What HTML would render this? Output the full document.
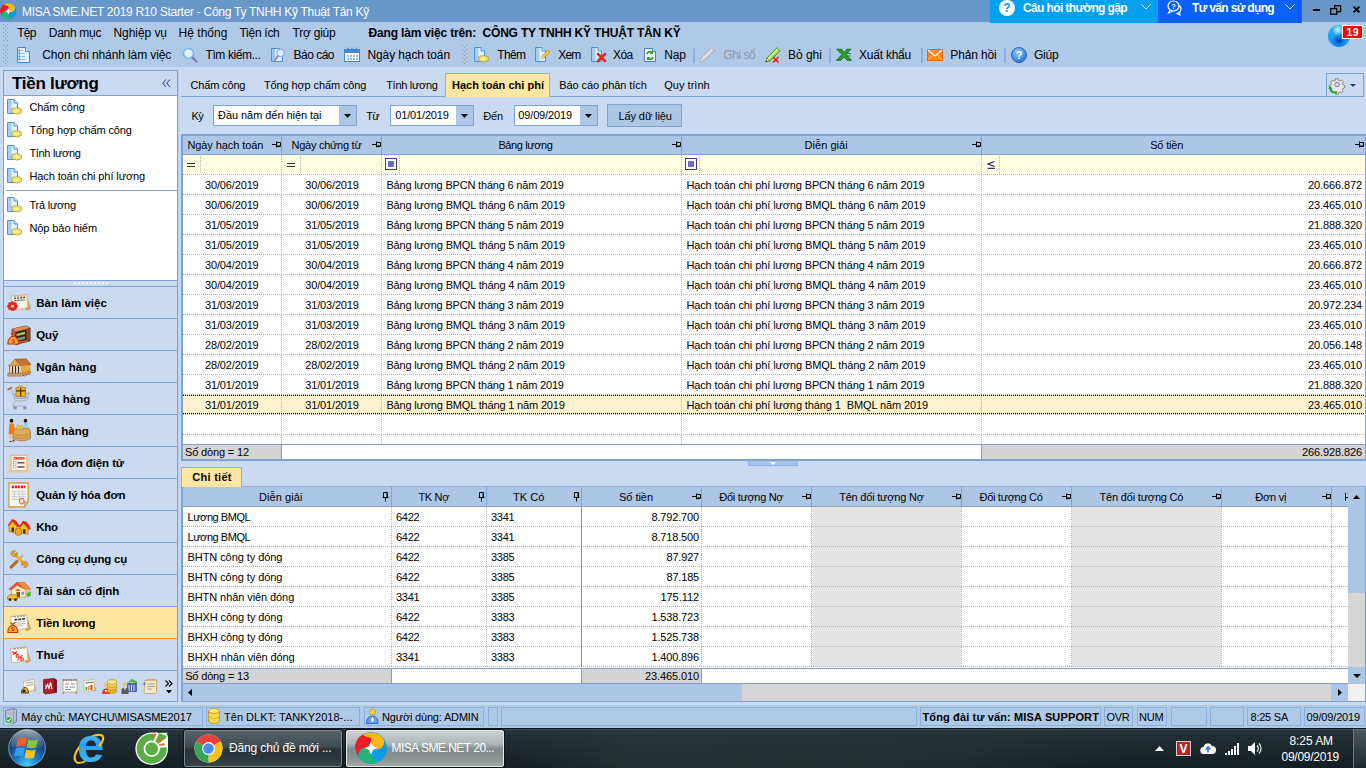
<!DOCTYPE html>
<html>
<head>
<meta charset="utf-8">
<title>MISA SME.NET 2019</title>
<style>
*{box-sizing:border-box;margin:0;padding:0}
html,body{width:1366px;height:768px;overflow:hidden}
body{position:relative;background:#cadaf0;font-family:"Liberation Sans",sans-serif;font-size:12px;color:#000;line-height:16px}
.a{position:absolute;white-space:pre}
svg{position:absolute;overflow:visible}
</style>
</head>
<body>
<div class="a" style="left:0px;top:0px;width:1366px;height:22px;background:#6796c8;"></div>
<div class="a" style="left:0px;top:22px;width:1366px;height:45px;background:#b0c9e7;"></div>
<svg style="left:-0.3px;top:3px" width="16.5" height="16.5" viewBox="0 0 32 32"><defs><clipPath id="lg1"><circle cx="16" cy="16" r="16"/></clipPath></defs><g clip-path="url(#lg1)"><circle cx="16" cy="16" r="16" fill="#1aa0e8"/><circle cx="8.500" cy="12" r="9.500" fill="#ee1c24"/><path d="M8 3.500C14-2 28 1 29.500 11 30 16 25 19 20.500 16.500 16 14 17 8 13 5.500 11 4 9 4 8 3.500z" fill="#fdb913"/><path d="M29 8.500C35 16 32 28 22 30.500 17 31 14.500 25 17 21.500 19.500 17 26 18 28 14 29 12 29 10 29 8.500z" fill="#0d9be8"/><path d="M24 29.500C17 34 5 31 3 22 2.500 17 8 14.500 11.500 16.500 16 19 15 25 19 27.500 21 28.500 23 29 24 29.500z" fill="#22b573"/><path d="M3.500 24C-2 17 1 5 10 2.500 15 2 18 7.500 15.500 11.500 13 16 6.500 15 4.500 19 3.500 21 3.500 23 3.500 24z" fill="#ee1c24"/><path d="M8 3.500C14-2 28 1 29.500 11 28 6 22 3.500 17 5 14 6 12 5 8 3.500z" fill="#fdb913"/><path d="M16 9.500L18 14 22.500 16 18 18 16 22.500 14 18 9.500 16 14 14z" fill="#fff"/></g></svg>
<span class="a" style="top:3.64px;font-size:12px;line-height:16px;left:22.00px;color:#fff;letter-spacing:-0.279px;">MISA SME.NET 2019 R10 Starter - Công Ty TNHH Kỹ Thuật Tân Kỹ</span>
<div class="a" style="left:990px;top:0px;width:168px;height:23px;background:#05a0f0;"></div>
<svg style="left:999px;top:-0.5px" width="16" height="16" viewBox="0 0 16 16"><circle cx="8" cy="8" r="8" fill="#fff"/><text x="8" y="12.300" font-family="Liberation Sans" font-weight="bold" font-size="12" fill="#05a0f0" text-anchor="middle">?</text></svg>
<span class="a" style="top:0.14px;font-size:12px;line-height:16px;left:1023.00px;font-weight:bold;color:#fff;letter-spacing:-0.623px;">Câu hỏi thường gặp</span>
<svg style="left:1141px;top:4px" width="10" height="7" viewBox="0 0 10 7"><path d="M.5 .5l4.500 4.500 4.500-4.500" fill="none" stroke="#d8efff" stroke-width="1"/></svg>
<div class="a" style="left:1158px;top:0px;width:144px;height:23px;background:#0a60fa;"></div>
<svg style="left:1167px;top:0px" width="18" height="15" viewBox="0 0 18 15"><ellipse cx="6.500" cy="6" rx="5.500" ry="5" fill="none" stroke="#fff" stroke-width="1.200"/><path d="M3 10l-1.500 3 4-2" fill="none" stroke="#fff" stroke-width="1.100"/><path d="M12 5.500a5 4.500 0 0 1-2 8l3 1.500-.5-2.500" fill="none" stroke="#fff" stroke-width="1.100"/><text x="6.500" y="9" font-family="Liberation Sans" font-weight="bold" font-size="7.500" fill="#fff" text-anchor="middle">?</text></svg>
<span class="a" style="top:0.14px;font-size:12px;line-height:16px;left:1192.00px;font-weight:bold;color:#fff;letter-spacing:-0.671px;">Tư vấn sử dụng</span>
<svg style="left:1285px;top:4px" width="10" height="7" viewBox="0 0 10 7"><path d="M.5 .5l4.500 4.500 4.500-4.500" fill="none" stroke="#d8e4ff" stroke-width="1"/></svg>
<div class="a" style="left:1313px;top:9px;width:7px;height:2px;background:#000;"></div>
<svg style="left:1330px;top:5px" width="12" height="10" viewBox="0 0 12 10"><rect x="4.600" y=".7" width="6" height="6" fill="none" stroke="#000" stroke-width="1.300"/><rect x=".7" y="3.600" width="6" height="5.600" fill="#6796c8" stroke="#000" stroke-width="1.300"/></svg>
<svg style="left:1353px;top:6px" width="7" height="7" viewBox="0 0 7 7"><path d="M.6 .6l5.800 5.800M6.400 .6l-5.800 5.800" stroke="#000" stroke-width="1.900"/></svg>
<svg style="left:3px;top:24px" width="5" height="18" viewBox="0 0 5 18"><rect x="0" y="0" width="1" height="1" fill="#9a98a4"/><rect x="4" y="0" width="1" height="1" fill="#9a98a4"/><rect x="2" y="2" width="1" height="1" fill="#9a98a4"/><rect x="0" y="4" width="1" height="1" fill="#9a98a4"/><rect x="4" y="4" width="1" height="1" fill="#9a98a4"/><rect x="2" y="6" width="1" height="1" fill="#9a98a4"/><rect x="0" y="8" width="1" height="1" fill="#9a98a4"/><rect x="4" y="8" width="1" height="1" fill="#9a98a4"/><rect x="2" y="10" width="1" height="1" fill="#9a98a4"/><rect x="0" y="12" width="1" height="1" fill="#9a98a4"/><rect x="4" y="12" width="1" height="1" fill="#9a98a4"/><rect x="2" y="14" width="1" height="1" fill="#9a98a4"/><rect x="0" y="16" width="1" height="1" fill="#9a98a4"/><rect x="4" y="16" width="1" height="1" fill="#9a98a4"/></svg>
<svg style="left:3px;top:45px" width="5" height="20" viewBox="0 0 5 20"><rect x="0" y="0" width="1" height="1" fill="#9a98a4"/><rect x="4" y="0" width="1" height="1" fill="#9a98a4"/><rect x="2" y="2" width="1" height="1" fill="#9a98a4"/><rect x="0" y="4" width="1" height="1" fill="#9a98a4"/><rect x="4" y="4" width="1" height="1" fill="#9a98a4"/><rect x="2" y="6" width="1" height="1" fill="#9a98a4"/><rect x="0" y="8" width="1" height="1" fill="#9a98a4"/><rect x="4" y="8" width="1" height="1" fill="#9a98a4"/><rect x="2" y="10" width="1" height="1" fill="#9a98a4"/><rect x="0" y="12" width="1" height="1" fill="#9a98a4"/><rect x="4" y="12" width="1" height="1" fill="#9a98a4"/><rect x="2" y="14" width="1" height="1" fill="#9a98a4"/><rect x="0" y="16" width="1" height="1" fill="#9a98a4"/><rect x="4" y="16" width="1" height="1" fill="#9a98a4"/><rect x="2" y="18" width="1" height="1" fill="#9a98a4"/></svg>
<span class="a" style="top:24.54px;font-size:12px;line-height:16px;left:17.30px;letter-spacing:-0.796px;">Tệp</span>
<span class="a" style="top:24.54px;font-size:12px;line-height:16px;left:48.80px;letter-spacing:-0.300px;">Danh mục</span>
<span class="a" style="top:24.54px;font-size:12px;line-height:16px;left:113.50px;letter-spacing:-0.061px;">Nghiệp vụ</span>
<span class="a" style="top:24.54px;font-size:12px;line-height:16px;left:178.50px;letter-spacing:0.037px;">Hệ thống</span>
<span class="a" style="top:24.54px;font-size:12px;line-height:16px;left:239.50px;letter-spacing:-0.281px;">Tiện ích</span>
<span class="a" style="top:24.54px;font-size:12px;line-height:16px;left:292.50px;letter-spacing:-0.223px;">Trợ giúp</span>
<span class="a" style="top:24.54px;font-size:12px;line-height:16px;left:368.50px;font-weight:bold;letter-spacing:-0.169px;">Đang làm việc trên:</span>
<span class="a" style="top:24.54px;font-size:12px;line-height:16px;left:482.50px;font-weight:bold;letter-spacing:-0.182px;">CÔNG TY TNHH KỸ THUẬT TÂN KỸ</span>
<svg style="left:16.3px;top:47px" width="16" height="16" viewBox="0 0 16 16"><path d="M1.5 .5h8l4 4v11h-12z" fill="#e4f0fc" stroke="#3f8ad6"/><path d="M9.5 .5v4h4" fill="#cfe3f8" stroke="#3f8ad6"/><rect x="2.500" y="2.5" width="1.800" height="1.800" fill="#2f7fd0"/><rect x="5.500" y="3.0" width="1.5" height="1" fill="#8abcec"/><rect x="2.500" y="5.5" width="1.800" height="1.800" fill="#2f7fd0"/><rect x="5.500" y="6.0" width="3.5" height="1" fill="#8abcec"/><rect x="2.500" y="8.5" width="1.800" height="1.800" fill="#2f7fd0"/><rect x="5.500" y="9.0" width="3.5" height="1" fill="#8abcec"/><rect x="2.500" y="11.5" width="1.800" height="1.800" fill="#2f7fd0"/><rect x="5.500" y="12.0" width="3.5" height="1" fill="#8abcec"/></svg>
<span class="a" style="top:46.54px;font-size:12px;line-height:16px;left:42.20px;letter-spacing:-0.105px;">Chọn chi nhánh làm việc</span>
<svg style="left:182px;top:47px" width="16" height="16" viewBox="0 0 16 16"><circle cx="6.5" cy="6.5" r="5" fill="#dff0ff" stroke="#79b4ea" stroke-width="1.6"/><path d="M10.5 10.5l4 4" stroke="#8a78c8" stroke-width="2.4" stroke-linecap="round"/></svg>
<span class="a" style="top:46.54px;font-size:12px;line-height:16px;left:205.50px;letter-spacing:-0.395px;">Tìm kiếm...</span>
<svg style="left:270px;top:47px" width="16" height="16" viewBox="0 0 16 16"><path d="M1.5 1.5h8l3 3v10h-11z" fill="#eaf3fd" stroke="#4a8fd8"/><path d="M2 2h3v12H2z" fill="#9cc6f2"/><circle cx="10.5" cy="6" r="3.6" fill="#e6f3ff" stroke="#7fb6ea" stroke-width="1.3"/><path d="M8 9l-3 4" stroke="#8a78c8" stroke-width="1.8" stroke-linecap="round"/></svg>
<span class="a" style="top:46.54px;font-size:12px;line-height:16px;left:293.50px;letter-spacing:-0.507px;">Báo cáo</span>
<svg style="left:344px;top:47px" width="16" height="16" viewBox="0 0 16 16"><rect x=".5" y="2.5" width="15" height="12" fill="#fff" stroke="#3f8ad6"/><rect x="1" y="3" width="14" height="3" fill="#3f8ad6"/><path d="M4 .5v3M8 .5v3M12 .5v3" stroke="#3f8ad6" stroke-width="1.2"/><rect x="3" y="8" width="2" height="2" fill="#8fbdea"/><rect x="6" y="8" width="2" height="2" fill="#8fbdea"/><rect x="9" y="8" width="2" height="2" fill="#8fbdea"/><rect x="12" y="8" width="2" height="2" fill="#8fbdea"/><rect x="3" y="11" width="2" height="2" fill="#8fbdea"/><rect x="6" y="11" width="2" height="2" fill="#8fbdea"/><rect x="9" y="11" width="2" height="2" fill="#8fbdea"/><rect x="12" y="11" width="2" height="2" fill="#8fbdea"/></svg>
<span class="a" style="top:46.54px;font-size:12px;line-height:16px;left:367.50px;letter-spacing:-0.112px;">Ngày hạch toán</span>
<svg style="left:462px;top:45px" width="5" height="20" viewBox="0 0 5 20"><rect x="0" y="0" width="1" height="1" fill="#9a98a4"/><rect x="4" y="0" width="1" height="1" fill="#9a98a4"/><rect x="2" y="2" width="1" height="1" fill="#9a98a4"/><rect x="0" y="4" width="1" height="1" fill="#9a98a4"/><rect x="4" y="4" width="1" height="1" fill="#9a98a4"/><rect x="2" y="6" width="1" height="1" fill="#9a98a4"/><rect x="0" y="8" width="1" height="1" fill="#9a98a4"/><rect x="4" y="8" width="1" height="1" fill="#9a98a4"/><rect x="2" y="10" width="1" height="1" fill="#9a98a4"/><rect x="0" y="12" width="1" height="1" fill="#9a98a4"/><rect x="4" y="12" width="1" height="1" fill="#9a98a4"/><rect x="2" y="14" width="1" height="1" fill="#9a98a4"/><rect x="0" y="16" width="1" height="1" fill="#9a98a4"/><rect x="4" y="16" width="1" height="1" fill="#9a98a4"/><rect x="2" y="18" width="1" height="1" fill="#9a98a4"/></svg>
<svg style="left:474px;top:47px" width="16" height="16" viewBox="0 0 16 16"><path d="M.5 .5h6.500l3.500 3.500v10.500h-10z" fill="#e6f1fc" stroke="#4a92dc"/><path d="M1 1h3.500v13H1z" fill="#a8cdf4"/><path d="M7 .5v3.500h3.500" fill="#d4e6f9" stroke="#4a92dc"/><g transform="translate(9.500,11.800) scale(1,.72)"><path d="M-5.500 0l1.200-1-.7-1.500 1.700-.3.300-1.400 1.700.5 1.300-1.100 1.300 1.100 1.700-.5.300 1.400 1.700.3-.7 1.500 1.200 1-1.200 1 .7 1.500-1.700.3-.3 1.400-1.700-.5-1.300 1.100-1.300-1.100-1.700.5-.3-1.400-1.700-.3.700-1.500z" fill="#f3e66a" stroke="#a39a28" stroke-width=".8"/><ellipse rx="2.600" ry="1.600" fill="#f8f0a0"/></g></svg>
<span class="a" style="top:46.54px;font-size:12px;line-height:16px;left:497.30px;letter-spacing:-0.672px;">Thêm</span>
<svg style="left:535px;top:47px" width="16" height="16" viewBox="0 0 16 16"><path d="M.5 .5h6.500l3.500 3.500v10.500h-10z" fill="#e6f1fc" stroke="#4a92dc"/><path d="M1 1h3.500v13H1z" fill="#a8cdf4"/><path d="M7 .5v3.500h3.500" fill="#d4e6f9" stroke="#4a92dc"/><path d="M6 12l1-3 6-6 2 2-6 6z" fill="#f5c63b" stroke="#b98a14" stroke-width=".7"/><path d="M6 12l1-3 2 2z" fill="#f7e3b0"/></svg>
<span class="a" style="top:46.54px;font-size:12px;line-height:16px;left:558.20px;letter-spacing:-0.763px;">Xem</span>
<svg style="left:591px;top:47px" width="16" height="16" viewBox="0 0 16 16"><path d="M.5 .5h6.500l3.500 3.500v10.500h-10z" fill="#e6f1fc" stroke="#4a92dc"/><path d="M1 1h3.500v13H1z" fill="#a8cdf4"/><path d="M7 .5v3.500h3.500" fill="#d4e6f9" stroke="#4a92dc"/><path d="M7 7l7 7M14 7l-7 7" stroke="#e0262c" stroke-width="2.6" stroke-linecap="round"/></svg>
<span class="a" style="top:46.54px;font-size:12px;line-height:16px;left:613.00px;letter-spacing:-0.586px;">Xóa</span>
<svg style="left:642px;top:47px" width="16" height="16" viewBox="0 0 16 16"><path d="M2.5 1.5h8l3 3v10h-11z" fill="#f2f6fc" stroke="#5b78b8"/><path d="M10.5 1.5v3h3" fill="#d5e1f3" stroke="#5b78b8"/><path d="M5 7a3 3 0 0 1 5-1.5" fill="none" stroke="#27a334" stroke-width="1.8"/><path d="M11 3.5v3.5h-3.5z" fill="#27a334"/><path d="M11 10a3 3 0 0 1-5 1.5" fill="none" stroke="#27a334" stroke-width="1.8"/><path d="M5 13.500v-3.500h3.500z" fill="#27a334"/></svg>
<span class="a" style="top:46.54px;font-size:12px;line-height:16px;left:664.30px;letter-spacing:-0.239px;">Nạp</span>
<div class="a" style="left:693px;top:48px;width:2px;height:15px;background:#8ab0e2;"></div>
<svg style="left:699px;top:47px" width="16" height="16" viewBox="0 0 16 16"><path d="M1 14.800l1.200-3.800L12.500 .7l3 3L5 14z" fill="#cfd2d6" stroke="#9a9ea6" stroke-width=".8"/><path d="M3.500 11.500L13.500 1.700" stroke="#e6e8ea" stroke-width="1.300"/><path d="M1 14.800l1.200-3.800 2.800 3z" fill="#ececec" stroke="#9a9ea6" stroke-width=".5"/></svg>
<span class="a" style="top:46.54px;font-size:12px;line-height:16px;left:723.30px;color:#8e959e;letter-spacing:-0.448px;">Ghi sổ</span>
<svg style="left:765px;top:47px" width="16" height="16" viewBox="0 0 16 16"><path d="M.8 14.800l1.200-3.800L12 .7l3 3L5 14z" fill="#a4e458" stroke="#3a8a1a" stroke-width=".9"/><path d="M3.500 11.500L13 1.700" stroke="#d4f8a0" stroke-width="1.200"/><path d="M.8 14.800l1.200-3.800 2.800 3z" fill="#f0e6c0" stroke="#3a6a1a" stroke-width=".5"/><path d="M.8 14.800l.5-1.500 1 1z" fill="#222"/><path d="M8 10l5.500 5.500M13.500 10L8 15.500" stroke="#ff0a0a" stroke-width="1.500"/></svg>
<span class="a" style="top:46.54px;font-size:12px;line-height:16px;left:788.00px;letter-spacing:-0.039px;">Bỏ ghi</span>
<div class="a" style="left:829px;top:48px;width:2px;height:15px;background:#8ab0e2;"></div>
<svg style="left:836px;top:47px" width="16" height="16" viewBox="0 0 16 16"><path d="M.8 2.200h4.700l2.500 3.200 3-3.200h4l-5 5.300 5.500 5.800H11l-3-3.500-3 3.500H.5L6 7.500z" fill="#27a030" stroke="#0e5e16" stroke-width=".8"/><path d="M10 6.500h5M10.500 9h4.500" stroke="#0e5e16" stroke-width=".7"/></svg>
<span class="a" style="top:46.54px;font-size:12px;line-height:16px;left:859.00px;letter-spacing:-0.227px;">Xuất khẩu</span>
<div class="a" style="left:921px;top:48px;width:2px;height:15px;background:#8ab0e2;"></div>
<svg style="left:927px;top:47px" width="16" height="16" viewBox="0 0 16 16"><rect x=".5" y="2.500" width="15" height="11" fill="#f58a2c" stroke="#d96a10"/><path d="M1 3l7 6 7-6" fill="none" stroke="#fff" stroke-width="1.1"/><path d="M1 13l5-5M15 13l-5-5" stroke="#ffd9b0" stroke-width=".8"/></svg>
<span class="a" style="top:46.54px;font-size:12px;line-height:16px;left:950.30px;letter-spacing:-0.134px;">Phản hồi</span>
<div class="a" style="left:1004px;top:48px;width:2px;height:15px;background:#8ab0e2;"></div>
<svg style="left:1011px;top:47px" width="16" height="16" viewBox="0 0 16 16"><defs><radialGradient id="hg" cx=".4" cy=".3" r=".8"><stop offset="0" stop-color="#8ec4ff"/><stop offset="1" stop-color="#1c6fd8"/></radialGradient></defs><circle cx="8" cy="8" r="7.500" fill="url(#hg)" stroke="#2a63b8"/><text x="8" y="12" font-family="Liberation Sans" font-weight="bold" font-size="11" fill="#fff" text-anchor="middle">?</text></svg>
<span class="a" style="top:46.54px;font-size:12px;line-height:16px;left:1034.00px;letter-spacing:-0.240px;">Giúp</span>
<svg style="left:1328px;top:25px" width="22" height="22" viewBox="0 0 22 22"><defs><radialGradient id="sg" cx=".45" cy=".22" r=".55"><stop offset="0" stop-color="#d0f6ff"/><stop offset=".45" stop-color="#2fb0f6"/><stop offset="1" stop-color="#1a98f0"/></radialGradient><radialGradient id="sg2" cx=".5" cy=".7" r=".35"><stop offset="0" stop-color="#0038b8"/><stop offset="1" stop-color="#0a60d8" stop-opacity="0"/></radialGradient></defs><circle cx="11" cy="11" r="11" fill="url(#sg)"/><circle cx="11" cy="11" r="11" fill="url(#sg2)"/></svg>
<div class="a" style="left:1342px;top:24.5px;width:20.5px;height:14px;background:#ff0000;border:.6px solid #fff;"></div>
<span class="a" style="top:24.16px;font-size:10.5px;line-height:16px;left:1346.50px;font-weight:bold;color:#fff;letter-spacing:0.406px;">19</span>
<div class="a" style="left:3px;top:70px;width:175px;height:632px;background:#cadaf0;border:1px solid #7ea3d3;"></div>
<div class="a" style="left:178px;top:70px;width:1px;height:632px;background:#b9cfee;"></div>
<span class="a" style="top:72.51px;font-size:17px;line-height:22px;left:12.00px;font-weight:bold;letter-spacing:-0.275px;">Tiền lương</span>
<svg style="left:162px;top:79px" width="9" height="9" viewBox="0 0 9 9"><path d="M4 .5L.8 4.200 4 8M8 .5L4.800 4.200 8 8" fill="none" stroke="#3c5f95" stroke-width="1.100"/></svg>
<div class="a" style="left:4px;top:95px;width:173px;height:1px;background:#7ea3d3;"></div>
<div class="a" style="left:4px;top:96px;width:173px;height:184px;background:#fff;"></div>
<svg style="left:7px;top:99px" width="16" height="16" viewBox="0 0 16 16"><path d="M.5 .5h6.500l3.500 3.500v10.500h-10z" fill="#e6f1fc" stroke="#4a92dc"/><path d="M1 1h3.500v13H1z" fill="#a8cdf4"/><path d="M7 .5v3.500h3.500" fill="#d4e6f9" stroke="#4a92dc"/><g transform="translate(9.500,11.800) scale(1,.72)"><path d="M-5.500 0l1.200-1-.7-1.500 1.700-.3.300-1.400 1.700.5 1.300-1.100 1.300 1.100 1.700-.5.300 1.400 1.700.3-.7 1.500 1.200 1-1.200 1 .7 1.500-1.700.3-.3 1.400-1.700-.5-1.300 1.100-1.300-1.100-1.700.5-.3-1.400-1.700-.3.700-1.500z" fill="#f3e66a" stroke="#a39a28" stroke-width=".8"/><ellipse rx="2.600" ry="1.600" fill="#f8f0a0"/></g></svg>
<span class="a" style="top:98.89px;font-size:11px;line-height:16px;left:29.40px;letter-spacing:-0.107px;">Chấm công</span>
<svg style="left:7px;top:122px" width="16" height="16" viewBox="0 0 16 16"><path d="M.5 .5h6.500l3.500 3.500v10.500h-10z" fill="#e6f1fc" stroke="#4a92dc"/><path d="M1 1h3.500v13H1z" fill="#a8cdf4"/><path d="M7 .5v3.500h3.500" fill="#d4e6f9" stroke="#4a92dc"/><g transform="translate(9.500,11.800) scale(1,.72)"><path d="M-5.500 0l1.200-1-.7-1.500 1.700-.3.300-1.400 1.700.5 1.300-1.100 1.300 1.100 1.700-.5.300 1.400 1.700.3-.7 1.500 1.200 1-1.200 1 .7 1.500-1.700.3-.3 1.400-1.700-.5-1.300 1.100-1.300-1.100-1.700.5-.3-1.400-1.700-.3.700-1.500z" fill="#f3e66a" stroke="#a39a28" stroke-width=".8"/><ellipse rx="2.600" ry="1.600" fill="#f8f0a0"/></g></svg>
<span class="a" style="top:121.89px;font-size:11px;line-height:16px;left:29.40px;letter-spacing:-0.109px;">Tổng hợp chấm công</span>
<svg style="left:7px;top:145px" width="16" height="16" viewBox="0 0 16 16"><path d="M.5 .5h6.500l3.500 3.500v10.500h-10z" fill="#e6f1fc" stroke="#4a92dc"/><path d="M1 1h3.500v13H1z" fill="#a8cdf4"/><path d="M7 .5v3.500h3.500" fill="#d4e6f9" stroke="#4a92dc"/><g transform="translate(9.500,11.800) scale(1,.72)"><path d="M-5.500 0l1.200-1-.7-1.500 1.700-.3.300-1.400 1.700.5 1.300-1.100 1.300 1.100 1.700-.5.300 1.400 1.700.3-.7 1.500 1.200 1-1.200 1 .7 1.500-1.700.3-.3 1.400-1.700-.5-1.300 1.100-1.300-1.100-1.700.5-.3-1.400-1.700-.3.700-1.500z" fill="#f3e66a" stroke="#a39a28" stroke-width=".8"/><ellipse rx="2.600" ry="1.600" fill="#f8f0a0"/></g></svg>
<span class="a" style="top:144.89px;font-size:11px;line-height:16px;left:29.40px;letter-spacing:-0.313px;">Tính lương</span>
<svg style="left:7px;top:168px" width="16" height="16" viewBox="0 0 16 16"><path d="M.5 .5h6.500l3.500 3.500v10.500h-10z" fill="#e6f1fc" stroke="#4a92dc"/><path d="M1 1h3.500v13H1z" fill="#a8cdf4"/><path d="M7 .5v3.500h3.500" fill="#d4e6f9" stroke="#4a92dc"/><g transform="translate(9.500,11.800) scale(1,.72)"><path d="M-5.500 0l1.200-1-.7-1.500 1.700-.3.300-1.400 1.700.5 1.300-1.100 1.300 1.100 1.700-.5.300 1.400 1.700.3-.7 1.500 1.200 1-1.200 1 .7 1.500-1.700.3-.3 1.400-1.700-.5-1.300 1.100-1.300-1.100-1.700.5-.3-1.400-1.700-.3.700-1.500z" fill="#f3e66a" stroke="#a39a28" stroke-width=".8"/><ellipse rx="2.600" ry="1.600" fill="#f8f0a0"/></g></svg>
<span class="a" style="top:167.89px;font-size:11px;line-height:16px;left:29.40px;letter-spacing:-0.097px;">Hạch toán chi phí lương</span>
<svg style="left:7px;top:197px" width="16" height="16" viewBox="0 0 16 16"><path d="M.5 .5h6.500l3.500 3.500v10.500h-10z" fill="#e6f1fc" stroke="#4a92dc"/><path d="M1 1h3.500v13H1z" fill="#a8cdf4"/><path d="M7 .5v3.500h3.500" fill="#d4e6f9" stroke="#4a92dc"/><g transform="translate(9.500,11.800) scale(1,.72)"><path d="M-5.500 0l1.200-1-.7-1.500 1.700-.3.300-1.400 1.700.5 1.300-1.100 1.300 1.100 1.700-.5.300 1.400 1.700.3-.7 1.500 1.200 1-1.200 1 .7 1.500-1.700.3-.3 1.400-1.700-.5-1.300 1.100-1.300-1.100-1.700.5-.3-1.400-1.700-.3.700-1.500z" fill="#f3e66a" stroke="#a39a28" stroke-width=".8"/><ellipse rx="2.600" ry="1.600" fill="#f8f0a0"/></g></svg>
<span class="a" style="top:196.89px;font-size:11px;line-height:16px;left:29.40px;letter-spacing:-0.212px;">Trả lương</span>
<svg style="left:7px;top:220px" width="16" height="16" viewBox="0 0 16 16"><path d="M.5 .5h6.500l3.500 3.500v10.500h-10z" fill="#e6f1fc" stroke="#4a92dc"/><path d="M1 1h3.500v13H1z" fill="#a8cdf4"/><path d="M7 .5v3.500h3.500" fill="#d4e6f9" stroke="#4a92dc"/><g transform="translate(9.500,11.800) scale(1,.72)"><path d="M-5.500 0l1.200-1-.7-1.500 1.700-.3.300-1.400 1.700.5 1.300-1.100 1.300 1.100 1.700-.5.300 1.400 1.700.3-.7 1.500 1.200 1-1.200 1 .7 1.500-1.700.3-.3 1.400-1.700-.5-1.300 1.100-1.300-1.100-1.700.5-.3-1.400-1.700-.3.700-1.500z" fill="#f3e66a" stroke="#a39a28" stroke-width=".8"/><ellipse rx="2.600" ry="1.600" fill="#f8f0a0"/></g></svg>
<span class="a" style="top:219.89px;font-size:11px;line-height:16px;left:29.40px;letter-spacing:-0.075px;">Nộp bảo hiểm</span>
<div class="a" style="left:6px;top:190px;width:171px;height:1px;background:#7ea3d3;"></div>
<div class="a" style="left:4px;top:280px;width:173px;height:1px;background:#7ea3d3;"></div>
<svg style="left:73px;top:282px" width="36" height="3" viewBox="0 0 36 3"><path d="M1.5 0L3.5 0 2 2.500 0 2.500z" fill="#f4f8fd"/><path d="M5.5 0L7.5 0 6 2.500 4 2.500z" fill="#f4f8fd"/><path d="M9.5 0L11.5 0 10 2.500 8 2.500z" fill="#f4f8fd"/><path d="M13.5 0L15.5 0 14 2.500 12 2.500z" fill="#f4f8fd"/><path d="M17.5 0L19.5 0 18 2.500 16 2.500z" fill="#f4f8fd"/><path d="M21.5 0L23.5 0 22 2.500 20 2.500z" fill="#f4f8fd"/><path d="M25.5 0L27.5 0 26 2.500 24 2.500z" fill="#f4f8fd"/><path d="M29.5 0L31.5 0 30 2.500 28 2.500z" fill="#f4f8fd"/><path d="M33.5 0L35.5 0 34 2.500 32 2.500z" fill="#f4f8fd"/></svg>
<div class="a" style="left:4px;top:286px;width:173px;height:1px;background:#7ea3d3;"></div>
<svg style="left:7px;top:293px" width="24" height="20" viewBox="0 0 24 22" preserveAspectRatio="none"><path d="M19 2l4.500 15-4.500 2z" fill="#d8a868" stroke="#a87838" stroke-width=".6"/><path d="M4 3.500L20 1.500l1 14.500c-5 1-9 3-15 3z" fill="#fbf5e6" stroke="#c8a878" stroke-width=".8"/><path d="M7 6l11-1.200M7.500 8.500l10-1" stroke="#4a3a2a" stroke-width="1.300" stroke-dasharray="2 1"/><path d="M8 3.300v1.500M11 3v1.500M14 2.700v1.500M17 2.400v1.500" stroke="#6a5a4a" stroke-width=".9"/><circle cx="9.10" cy="14.50" r="1.750" fill="#e8202a"/><circle cx="8.05" cy="17.05" r="1.750" fill="#e8202a"/><circle cx="5.50" cy="18.10" r="1.750" fill="#e8202a"/><circle cx="2.95" cy="17.05" r="1.750" fill="#e8202a"/><circle cx="1.90" cy="14.50" r="1.750" fill="#e8202a"/><circle cx="2.95" cy="11.95" r="1.750" fill="#e8202a"/><circle cx="5.50" cy="10.90" r="1.750" fill="#e8202a"/><circle cx="8.05" cy="11.95" r="1.750" fill="#e8202a"/><circle cx="5.500" cy="14.500" r="2.600" fill="#e8202a"/><circle cx="5.500" cy="14.500" r="1.600" fill="#ffd23a"/></svg>
<span class="a" style="top:294.62px;font-size:11.5px;line-height:16px;left:36.30px;font-weight:bold;letter-spacing:0.023px;">Bàn làm việc</span>
<div class="a" style="left:4px;top:318px;width:173px;height:1px;background:#7ea3d3;"></div>
<svg style="left:7px;top:325px" width="24" height="20" viewBox="0 0 24 22" preserveAspectRatio="none"><path d="M5 4.500L19 1l4 2v14.500L9 21.500 5 19z" fill="#b8683a" stroke="#6a3418" stroke-width=".8"/><path d="M5 4.500L19 1l4 2L9 6.500z" fill="#dc9060"/><path d="M8 8L19.500 5v11.500L8 19z" fill="#2a2218"/><path d="M9.500 9.500l8.500-2.200v3l-8.500 2.200z" fill="#b4bc5c"/><path d="M9.500 14.500l8.500-2.200v3l-8.500 2.200z" fill="#8a9078"/><path d="M19.500 5L23 3.500v14l-3.500-1z" fill="#8a4a22" stroke="#5a2a10" stroke-width=".5"/><path d="M.8 21c0-5.500 3-8.500 5.500-8.500s5.500 3 5.500 8.500z" fill="#f6b21e" stroke="#c8301a" stroke-width="1.100"/><path d="M3.800 9.500l2.500 3 2.500-3-2.500 1z" fill="#f6b21e" stroke="#c8301a" stroke-width=".9"/><text x="6.300" y="19.500" font-size="6.500" font-weight="bold" font-family="Liberation Sans" text-anchor="middle" fill="#c8301a">$</text></svg>
<span class="a" style="top:326.62px;font-size:11.5px;line-height:16px;left:36.30px;font-weight:bold;letter-spacing:-0.158px;">Quỹ</span>
<div class="a" style="left:4px;top:350px;width:173px;height:1px;background:#7ea3d3;"></div>
<svg style="left:7px;top:357px" width="24" height="20" viewBox="0 0 24 22" preserveAspectRatio="none"><path d="M8 2.500L19.500 2 24 8.500 14 10z" fill="#c47436" stroke="#7a3f14" stroke-width=".5"/><path d="M1.500 10L8 2.500 14.500 10z" fill="#e8a456" stroke="#8a4f1e" stroke-width=".6"/><circle cx="8" cy="7" r="1.500" fill="#f6d23a" stroke="#8a6a10" stroke-width=".4"/><path d="M14 10l9.500-1.500v7L14 18z" fill="#e8a838"/><rect x="2.500" y="10" width="11.500" height="8" fill="#3a2416"/><path d="M4 10v8M7 10v8M10 10v8M13 10v8" stroke="#f8eeda" stroke-width="1.700"/><path d="M.8 18H14l9.500-2.500.5 2L15 21H.8z" fill="#dc9c5c" stroke="#8a5a2a" stroke-width=".6"/><path d="M16 19.500l1.500 1.500M18.500 18.800l1.500 1.500M21 18l1.500 1.500" stroke="#3a2416" stroke-width=".9"/></svg>
<span class="a" style="top:358.62px;font-size:11.5px;line-height:16px;left:36.30px;font-weight:bold;letter-spacing:0.098px;">Ngân hàng</span>
<div class="a" style="left:4px;top:382px;width:173px;height:1px;background:#7ea3d3;"></div>
<svg style="left:7px;top:386px" width="24" height="24" viewBox="0 0 24 22" preserveAspectRatio="none"><path d="M.5 3.500l4.500-2" stroke="#a8683a" stroke-width="1.600"/><path d="M4.500 2l3.500 11c0 1 10 1 12.500-.5l2-7" fill="none" stroke="#b4bac2" stroke-width="1.300"/><path d="M6.500 7.500c5 1.500 11 1 15.500-1M7.500 10.500c5 1.500 9.500 1 13.500-.5" fill="none" stroke="#9aa0a8" stroke-width="1"/><rect x="9" y="1.500" width="9.500" height="8" fill="#f6b41e" stroke="#a86a10" stroke-width=".7"/><path d="M13.700 1.500v8M9 4.500h9.500" stroke="#4a2a10" stroke-width="1.100"/><path d="M11.500 1.500c0-2 2-2 2.200 0c.2-2 2.200-2 2.200 0" fill="#f6c83a" stroke="#a86a10" stroke-width=".6"/><path d="M8 14l-2 4.500h13" fill="none" stroke="#b4bac2" stroke-width="1.200"/><ellipse cx="8" cy="20" rx="2" ry="1.500" fill="#8a9098"/><ellipse cx="18" cy="20" rx="2" ry="1.500" fill="#8a9098"/></svg>
<span class="a" style="top:390.62px;font-size:11.5px;line-height:16px;left:36.30px;font-weight:bold;letter-spacing:0.041px;">Mua hàng</span>
<div class="a" style="left:4px;top:414px;width:173px;height:1px;background:#7ea3d3;"></div>
<svg style="left:7px;top:418px" width="24" height="24" viewBox="0 0 24 22" preserveAspectRatio="none"><circle cx="4.500" cy="2.500" r="1.900" fill="#2a1a10"/><path d="M2.500 5h4.500l1.500 10h-7z" fill="#f07a1e"/><path d="M3.500 15v6M6 15v5.500" stroke="#e8b890" stroke-width="1.100"/><path d="M2.500 21.500h2M5.500 21h2" stroke="#2a1a10" stroke-width="1"/><circle cx="18.500" cy="2.500" r="1.800" fill="#2a1a10"/><path d="M16.500 4.800h4.500l.5 7h-5z" fill="#a8cce8"/><path d="M17 12h4v2h-4z" fill="#2a2a3a"/><path d="M6 12l3-2.500h13l1.500 2.500v7c-5 2.500-12 2.500-17.500 0z" fill="#dca85c" stroke="#9a6a2a" stroke-width=".6"/><path d="M6 14.500c5 2 12 2 17.500 0M6 17c5 2 12 2 17.500 0" fill="none" stroke="#b8843c" stroke-width=".7"/><path d="M9 10l2-4 2 2.500 1.500-2 2 3.500z" fill="#f6d23a" stroke="#a8861a" stroke-width=".5"/></svg>
<span class="a" style="top:422.62px;font-size:11.5px;line-height:16px;left:36.30px;font-weight:bold;letter-spacing:0.014px;">Bán hàng</span>
<div class="a" style="left:4px;top:446px;width:173px;height:1px;background:#7ea3d3;"></div>
<svg style="left:7px;top:453px" width="24" height="20" viewBox="0 0 24 22" preserveAspectRatio="none"><path d="M1.500 6.500L4 4.500v14.500l-2.500 1.500zM22.500 6.500L20 4.500v14.500l2.500 1.500z" fill="#ecd4a8"/><path d="M4 2.500h16v17H4z" fill="#fbf3e2" stroke="#d0aa74" stroke-width=".9"/><path d="M.5 20h23v1.500H.5z" fill="#e8c898"/><rect x="6.500" y="4.500" width="11" height="2.600" fill="#e83a2a"/><path d="M7.500 5.800h9" stroke="#fbf3e2" stroke-width=".7" stroke-dasharray="1.500 1"/><rect x="6.500" y="9.500" width="2.500" height="2.500" fill="#fff" stroke="#8a8a8a" stroke-width=".5"/><rect x="6.500" y="14" width="2.500" height="2.500" fill="#fff" stroke="#8a8a8a" stroke-width=".5"/><path d="M10.500 10.800h7M10.500 15.300h7" stroke="#5a5a5a" stroke-width="1.700"/></svg>
<span class="a" style="top:454.62px;font-size:11.5px;line-height:16px;left:36.30px;font-weight:bold;letter-spacing:-0.103px;">Hóa đơn điện tử</span>
<div class="a" style="left:4px;top:478px;width:173px;height:1px;background:#7ea3d3;"></div>
<svg style="left:8px;top:482px" width="22" height="24" viewBox="0 0 24 22" preserveAspectRatio="none"><path d="M1 1h21v17l-4 5H1z" fill="#fdfaf4" stroke="#d09a4a" stroke-width="1.400"/><path d="M22 18h-4v5z" fill="#e8c080" stroke="#d09a4a" stroke-width=".7"/><path d="M4 4.500h15" stroke="#e8202a" stroke-width="2.400" stroke-dasharray="2.500 .8"/><path d="M3.500 8.500h16M3.500 11h16M3.500 13.500h16M3.500 16h10M7 8.500v7.500M12 8.500v7.500M16 8.500v5" stroke="#b4b8c8" stroke-width=".7"/><circle cx="15" cy="17.500" r="2.600" fill="#f8d8d8" stroke="#e05a6a" stroke-width="1"/></svg>
<span class="a" style="top:486.62px;font-size:11.5px;line-height:16px;left:36.30px;font-weight:bold;letter-spacing:-0.150px;">Quản lý hóa đơn</span>
<div class="a" style="left:4px;top:510px;width:173px;height:1px;background:#7ea3d3;"></div>
<svg style="left:7px;top:517px" width="24" height="20" viewBox="0 0 24 22" preserveAspectRatio="none"><path d="M.5 9.500L5 2.500l3.500 1L13 10l-2 1z" fill="#e8281e"/><path d="M2 9.500L5.500 5 10 10.500V18l-8-2z" fill="#f6c21e" stroke="#8a5a10" stroke-width=".6"/><path d="M4.500 11.500h2.500v5l-2.500-.6z" fill="#4a2a10"/><path d="M11.500 11L16 4l4 1.500 4 7.500-2 1z" fill="#e8281e"/><path d="M13 11.500L16.500 7 21 12.500V19l-8-2z" fill="#f6c21e" stroke="#8a5a10" stroke-width=".6"/><path d="M16 13.500h2.500v5l-2.500-.6z" fill="#4a2a10"/><path d="M8.500 14l3-2 3 2v5l-3 1.500-3-1.500z" fill="#f6a81e" stroke="#8a5a10" stroke-width=".6"/></svg>
<span class="a" style="top:518.62px;font-size:11.5px;line-height:16px;left:36.30px;font-weight:bold;letter-spacing:-0.253px;">Kho</span>
<div class="a" style="left:4px;top:542px;width:173px;height:1px;background:#7ea3d3;"></div>
<svg style="left:7px;top:549px" width="24" height="20" viewBox="0 0 24 22" preserveAspectRatio="none"><g transform="translate(2.500,.5)"><path d="M3 18L14.500 5.500" stroke="#a0a6ae" stroke-width="1.800"/><path d="M13.500 6.500l4-4.500" stroke="#d4d8de" stroke-width="1.500"/><path d="M1.800 19.300l5.500-6" stroke="#a8642a" stroke-width="3.400" stroke-linecap="round"/><path d="M2.300 18.800l5-5.500" stroke="#d89a4a" stroke-width="1" stroke-dasharray="1.200 1"/><path d="M5 5.500l10 10" stroke="#f6a81e" stroke-width="2.800"/><path d="M1.500 5.500a3.400 3.400 0 0 1 4.500-4l-2 2.200 1.500 1.500 2.200-2a3.400 3.400 0 0 1-4 4.500z" fill="#f6a81e" stroke="#8a5a10" stroke-width=".6"/><path d="M18.500 15.500a3.400 3.400 0 0 1-4.500 4l2-2.200-1.500-1.500-2.200 2a3.400 3.400 0 0 1 4-4.500z" fill="#f6a81e" stroke="#8a5a10" stroke-width=".6"/></g></svg>
<span class="a" style="top:550.62px;font-size:11.5px;line-height:16px;left:36.30px;font-weight:bold;letter-spacing:-0.214px;">Công cụ dụng cụ</span>
<div class="a" style="left:4px;top:574px;width:173px;height:1px;background:#7ea3d3;"></div>
<svg style="left:7px;top:581px" width="24" height="20" viewBox="0 0 24 22" preserveAspectRatio="none"><path d="M2 9L10 1.500l8 .5 5.500 7-5 .5L10 5 4.500 10z" fill="#f0502a" stroke="#b02a10" stroke-width=".5"/><path d="M10 1.500l8 .5 5.500 7-5 .5z" fill="#f88a3a"/><path d="M4.500 10L10 5l8.500 4.500V18l-14 1z" fill="#fbe8c0" stroke="#b88a4a" stroke-width=".6"/><path d="M18.500 9.500l3.500-.5V16l-3.500 2z" fill="#e8c890"/><path d="M8 11l3-2.500 3 2.500z" fill="#f0502a"/><rect x="9.500" y="12" width="3.500" height="6" fill="#8a4a1a"/><rect x="14.500" y="12" width="2.500" height="3" fill="#6a9ad8"/><path d="M.5 17.500l2-2.500h6l2 2.500v2.500H.5z" fill="#f6c21e" stroke="#8a6a10" stroke-width=".6"/><circle cx="3" cy="20.500" r="1.400" fill="#3a2a10"/><circle cx="8.500" cy="20.500" r="1.400" fill="#3a2a10"/><path d="M19 14l4.500-3 .5 5-3.500 2z" fill="#4ab83a"/></svg>
<span class="a" style="top:582.62px;font-size:11.5px;line-height:16px;left:36.30px;font-weight:bold;letter-spacing:-0.048px;">Tài sản cố định</span>
<div class="a" style="left:4px;top:606px;width:173px;height:1px;background:#7ea3d3;"></div>
<div class="a" style="left:4px;top:607px;width:173px;height:31px;background:#ffe6a0;"></div>
<svg style="left:7px;top:613px" width="24" height="20" viewBox="0 0 24 22" preserveAspectRatio="none"><path d="M19 2.500l4.500 15-4.500 2z" fill="#d8a868" stroke="#a87838" stroke-width=".6"/><path d="M3.500 4L20 2l1 14.500c-5 1-10 3-16 3z" fill="#fdf9f0" stroke="#c8a878" stroke-width=".8"/><path d="M8 3.300v1.700M11 3v1.700M14 2.700v1.700M17 2.400v1.700" stroke="#5a4a3a" stroke-width=".9"/><path d="M7.500 7.500l11-1.200" stroke="#2a2a3a" stroke-width="1.700" stroke-dasharray="3 .8"/><path d="M8 10.500l10-1M8 12.500l10-1M8.500 14.500l7-.7" stroke="#a8a8b0" stroke-width=".8"/><path d="M.8 21.500c0-5 2.500-8 5-8s5 3 5 8z" fill="#f6b21e" stroke="#c8301a" stroke-width="1.100"/><path d="M3.500 10.800l2.300 2.700 2.300-2.700-2.300.8z" fill="#f6b21e" stroke="#c8301a" stroke-width=".9"/><text x="5.800" y="20" font-size="6.500" font-weight="bold" font-family="Liberation Sans" text-anchor="middle" fill="#c8301a">$</text></svg>
<span class="a" style="top:614.62px;font-size:11.5px;line-height:16px;left:36.30px;font-weight:bold;letter-spacing:-0.138px;">Tiền lương</span>
<div class="a" style="left:4px;top:638px;width:173px;height:1px;background:#7ea3d3;"></div>
<svg style="left:7px;top:645px" width="24" height="20" viewBox="0 0 24 22" preserveAspectRatio="none"><path d="M19 2.500l4.500 15-4.500 2z" fill="#d8a868" stroke="#a87838" stroke-width=".6"/><path d="M3.500 4L20 2l1 14.500c-5 1-10 3-16 3z" fill="#fdf9f0" stroke="#c8a878" stroke-width=".8"/><path d="M8 3.300v1.700M11 3v1.700M14 2.700v1.700M17 2.400v1.700" stroke="#5a4a3a" stroke-width=".9"/><path d="M5 7.500l6 3M6 10.500l4-3.500" stroke="#e8202a" stroke-width="1.200"/><text x="13" y="17.500" font-size="10" font-weight="bold" font-family="Liberation Sans" text-anchor="middle" fill="#e8202a" transform="rotate(8 13 14)">%</text></svg>
<span class="a" style="top:646.62px;font-size:11.5px;line-height:16px;left:36.30px;font-weight:bold;letter-spacing:0.129px;">Thuế</span>
<div class="a" style="left:4px;top:670px;width:173px;height:1px;background:#7ea3d3;"></div>
<div class="a" style="left:4px;top:638px;width:173px;height:1px;background:#f29536;"></div>
<svg style="left:21px;top:678px" width="16" height="16" viewBox="0 0 16 16"><path d="M12.500 2l3 10.500-3 1.500z" fill="#d8a868"/><path d="M2.500 3L13 1.500l.8 10.500c-3.500.8-6.500 2-10.500 2z" fill="#fdf9f0" stroke="#c8a878" stroke-width=".7"/><path d="M5 5l7-.8M5 7.500l7-.8" stroke="#8a8078" stroke-width=".8"/><path d="M.5 15c0-3.500 1.700-5.500 3.500-5.500s3.500 2 3.500 5.500z" fill="#f6b21e" stroke="#3a2a10" stroke-width=".9"/><circle cx="3" cy="13" r="1.600" fill="#1a1a1a"/></svg>
<svg style="left:42px;top:678px" width="16" height="16" viewBox="0 0 16 16"><path d="M1.500 1.500L12 .5l2.500 1.500v12.500L3 16 1.500 14.500z" fill="#a8202a" stroke="#6a1018" stroke-width=".7"/><path d="M12 .5l2.500 1.500v12.500L12 13z" fill="#7a1018"/><path d="M3 8h2.500M3.500 11l2-4.500 1.500 4 1.500-6 1.500 6.500" fill="none" stroke="#fff" stroke-width="1.100"/></svg>
<svg style="left:62px;top:678px" width="16" height="16" viewBox="0 0 16 16"><path d="M1 2h14v12H1z" fill="#fff" stroke="#c8a878" stroke-width="1"/><path d="M1 2h14" stroke="#3a3a3a" stroke-width="1.200" stroke-dasharray="1.500 1"/><path d="M3 6h4M9 6h4" stroke="#e05a6a" stroke-width="1.200"/><path d="M3 9h3M8 9h5M3 11.500h6" stroke="#6a8ad8" stroke-width="1"/><path d="M2 14l-1 2M14 14l1 2" stroke="#8a6a3a" stroke-width="1"/></svg>
<svg style="left:81px;top:678px" width="16" height="16" viewBox="0 0 16 16"><path d="M12.500 2l3 10.500-3 1.500z" fill="#d8a868"/><path d="M2.500 3L13 1.500l.8 10.500c-3.500.8-6.500 2-10.500 2z" fill="#fdf9f0" stroke="#c8a878" stroke-width=".7"/><path d="M4.500 5l8-.8" stroke="#6a6058" stroke-width="1"/><rect x="4.500" y="9" width="1.800" height="3.500" fill="#3ab03a"/><rect x="7" y="8" width="1.800" height="4.300" fill="#f0a020"/><rect x="9.500" y="6.800" width="1.800" height="5.200" fill="#e8282a"/></svg>
<svg style="left:101px;top:678px" width="16" height="16" viewBox="0 0 16 16"><circle cx="5" cy="7" r="2.300" fill="#f0c090"/><path d="M1 16c0-4 2-5.500 4-5.500s4 1.500 4 5.500z" fill="#e8382a"/><path d="M3.500 12l1.500 2.500 1.500-2.500z" fill="#fff"/><ellipse cx="11" cy="13" rx="4.800" ry="2.200" fill="#f2b01e" stroke="#a87a10" stroke-width=".6"/><ellipse cx="11" cy="10" rx="4.800" ry="2.200" fill="#f6c83a" stroke="#a87a10" stroke-width=".6"/><ellipse cx="11" cy="7" rx="4.800" ry="2.200" fill="#f6d85a" stroke="#a87a10" stroke-width=".6"/><ellipse cx="11" cy="4" rx="4.800" ry="2.200" fill="#fbe88a" stroke="#a87a10" stroke-width=".6"/></svg>
<svg style="left:121px;top:678px" width="16" height="16" viewBox="0 0 16 16"><path d="M6 5l5-4 5 2.500v2L11 4z" fill="#4ab83a"/><path d="M6.500 5.500h9v8h-9z" fill="#4a6ab8" stroke="#2a3a7a" stroke-width=".6"/><path d="M8 7v6M10.500 7v6M13 7v6" stroke="#d8e0f0" stroke-width="1"/><circle cx="4" cy="6.500" r="2.300" fill="#e8c098"/><path d="M.5 16v-4.500c0-2.500 7-2.500 7 0V16z" fill="#5a5a5a"/><path d="M3 9.500l1 3 1-3z" fill="#fff"/></svg>
<svg style="left:142px;top:678px" width="16" height="16" viewBox="0 0 16 16"><path d="M3 2.500h11.500v11c0 1-1 2-2 2H4c-1 0-2-1-2-2z" fill="#f6e8cc" stroke="#c89858" stroke-width=".8"/><path d="M3 2.500c0-1.500 11.500-1.500 11.500 0" fill="#e8c898" stroke="#c89858" stroke-width=".7"/><path d="M5 6h8M5 8.500h8M5 11h5" stroke="#a89878" stroke-width=".9"/><path d="M.3 6l3-1.500v3z" fill="#4a7ad8"/></svg>
<svg style="left:165px;top:680px" width="8" height="14" viewBox="0 0 8 14"><path d="M.5 .5l3 3-3 3M4 .5l3 3-3 3" fill="none" stroke="#000" stroke-width="1.100"/><path d="M1 10h6l-3 3.500z" fill="#000"/></svg>
<div class="a" style="left:181px;top:96px;width:1183px;height:1px;background:#7ea3d3;"></div>
<span class="a" style="top:76.99px;font-size:11px;line-height:16px;left:190.60px;letter-spacing:-0.174px;">Chấm công</span>
<span class="a" style="top:76.99px;font-size:11px;line-height:16px;left:264.00px;letter-spacing:-0.120px;">Tổng hợp chấm công</span>
<span class="a" style="top:76.99px;font-size:11px;line-height:16px;left:386.20px;letter-spacing:-0.293px;">Tính lương</span>
<div class="a" style="left:445px;top:73px;width:105px;height:24px;background:#ffe6a2;border:1px solid #8eb0e0;border-bottom:none;border-radius:1px 1px 0 0;"></div>
<span class="a" style="top:76.99px;font-size:11px;line-height:16px;left:452.00px;font-weight:bold;letter-spacing:0.018px;">Hạch toán chi phí</span>
<span class="a" style="top:76.99px;font-size:11px;line-height:16px;left:559.30px;letter-spacing:-0.076px;">Báo cáo phân tích</span>
<span class="a" style="top:76.99px;font-size:11px;line-height:16px;left:664.30px;letter-spacing:0.017px;">Quy trình</span>
<div class="a" style="left:1326px;top:73px;width:38px;height:24px;border:1px solid #7ea3d3;border-bottom:none;"></div>
<svg style="left:1328px;top:76px" width="18" height="18" viewBox="0 0 18 18"><g transform="translate(9,8.500)"><path d="M-1.500-7h3l.5 2 1.800.8 1.800-1.100 2.100 2.100-1.100 1.800.8 1.800 2 .5v3l-2 .5-.8 1.800 1.100 1.800-2.100 2.100-1.800-1.100-1.800.8-.5 2h-3l-.5-2-1.800-.8-1.800 1.100-2.100-2.100 1.100-1.800-.8-1.800-2-.5v-3l2-.5.8-1.800-1.100-1.800 2.100-2.100 1.800 1.100 1.800-.8z" transform="scale(.82)" fill="#e8e8e8" stroke="#707070" stroke-width="1"/><circle r="2.300" fill="#cadaf0" stroke="#707070" stroke-width=".8"/></g><path d="M2 12a5 5 0 0 0 7 4" fill="none" stroke="#2aa02a" stroke-width="2"/><path d="M0 12.500l2.500-2.500 2 3z" fill="#2aa02a"/></svg>
<svg style="left:1350px;top:84px" width="6" height="3" viewBox="0 0 6 3"><path d="M0 0h6l-3 3z" fill="#1a3a8a"/></svg>
<span class="a" style="top:107.99px;font-size:11px;line-height:16px;left:191.50px;letter-spacing:-0.522px;">Kỳ</span>
<div class="a" style="left:213px;top:105px;width:144px;height:21px;background:#fff;border:1px solid #7ea3d3;"></div>
<div class="a" style="left:339px;top:106px;width:17px;height:19px;background:#adc6e6;"></div>
<svg style="left:344px;top:114px" width="7" height="4" viewBox="0 0 7 4"><path d="M0 0h7l-3.500 4z" fill="#000"/></svg>
<span class="a" style="top:107.49px;font-size:11px;line-height:16px;left:218.00px;letter-spacing:-0.054px;">Đầu năm đến hiện tại</span>
<span class="a" style="top:107.99px;font-size:11px;line-height:16px;left:366.30px;letter-spacing:-0.697px;">Từ</span>
<div class="a" style="left:390px;top:105px;width:84px;height:21px;background:#fff;border:1px solid #7ea3d3;"></div>
<div class="a" style="left:456px;top:106px;width:17px;height:19px;background:#adc6e6;"></div>
<svg style="left:461px;top:114px" width="7" height="4" viewBox="0 0 7 4"><path d="M0 0h7l-3.500 4z" fill="#000"/></svg>
<span class="a" style="top:107.49px;font-size:11px;line-height:16px;left:395.20px;letter-spacing:-0.146px;">01/01/2019</span>
<span class="a" style="top:107.99px;font-size:11px;line-height:16px;left:483.30px;letter-spacing:-0.229px;">Đến</span>
<div class="a" style="left:514px;top:105px;width:84px;height:21px;background:#fff;border:1px solid #7ea3d3;"></div>
<div class="a" style="left:580px;top:106px;width:17px;height:19px;background:#adc6e6;"></div>
<svg style="left:585px;top:114px" width="7" height="4" viewBox="0 0 7 4"><path d="M0 0h7l-3.500 4z" fill="#000"/></svg>
<span class="a" style="top:107.49px;font-size:11px;line-height:16px;left:518.30px;letter-spacing:-0.146px;">09/09/2019</span>
<div class="a" style="left:607px;top:104px;width:75px;height:23px;background:#adc6e6;border:1px solid #7ea3d3;"></div>
<span class="a" style="top:107.99px;font-size:11px;line-height:16px;left:618.50px;letter-spacing:-0.105px;">Lấy dữ liệu</span>
<div class="a" style="left:181px;top:134px;width:1185px;height:327px;background:#fff;border:1px solid #7ea3d3;border-width:2px 1px 2px 2px;"></div>
<div class="a" style="left:183px;top:136px;width:1182px;height:18px;background:#adc6e6;"></div>
<div class="a" style="left:183px;top:154px;width:1182px;height:1px;background:#7ea3d3;"></div>
<div class="a" style="left:281px;top:136px;width:1px;height:18px;background:#7ea3d3;"></div>
<div class="a" style="left:381px;top:136px;width:1px;height:18px;background:#7ea3d3;"></div>
<div class="a" style="left:681px;top:136px;width:1px;height:18px;background:#7ea3d3;"></div>
<div class="a" style="left:981px;top:136px;width:1px;height:18px;background:#7ea3d3;"></div>
<span class="a" style="top:136.59px;font-size:11px;line-height:16px;left:187.40px;letter-spacing:-0.076px;">Ngày hạch toán</span>
<svg style="left:271.5px;top:141px" width="9" height="7" viewBox="0 0 9 7"><path d="M0 3.500h4M4.500 .5v6M4.500 1.500h4v3.500h-4M4.500 5.500h4" fill="none" stroke="#000" stroke-width="1"/></svg>
<span class="a" style="top:136.59px;font-size:11px;line-height:16px;left:291.50px;letter-spacing:-0.264px;">Ngày chứng từ</span>
<svg style="left:371.5px;top:141px" width="9" height="7" viewBox="0 0 9 7"><path d="M0 3.500h4M4.500 .5v6M4.500 1.500h4v3.500h-4M4.500 5.500h4" fill="none" stroke="#000" stroke-width="1"/></svg>
<span class="a" style="top:136.59px;font-size:11px;line-height:16px;left:498.40px;letter-spacing:-0.402px;">Bảng lương</span>
<svg style="left:671.5px;top:141px" width="9" height="7" viewBox="0 0 9 7"><path d="M0 3.500h4M4.500 .5v6M4.500 1.500h4v3.500h-4M4.500 5.500h4" fill="none" stroke="#000" stroke-width="1"/></svg>
<span class="a" style="top:136.59px;font-size:11px;line-height:16px;left:804.50px;letter-spacing:0.054px;">Diễn giải</span>
<svg style="left:971.5px;top:141px" width="9" height="7" viewBox="0 0 9 7"><path d="M0 3.500h4M4.500 .5v6M4.500 1.500h4v3.500h-4M4.500 5.500h4" fill="none" stroke="#000" stroke-width="1"/></svg>
<span class="a" style="top:136.59px;font-size:11px;line-height:16px;left:1150.20px;letter-spacing:-0.179px;">Số tiền</span>
<svg style="left:1355px;top:141px" width="9" height="7" viewBox="0 0 9 7"><path d="M0 3.500h4M4.500 .5v6M4.500 1.500h4v3.500h-4M4.500 5.500h4" fill="none" stroke="#000" stroke-width="1"/></svg>
<div class="a" style="left:183px;top:155px;width:1182px;height:19px;background:#ffffe4;"></div>
<div class="a" style="left:187px;top:163px;width:8px;height:1px;background:#333;"></div>
<div class="a" style="left:187px;top:166px;width:8px;height:1px;background:#333;"></div>
<div class="a" style="left:287px;top:163px;width:8px;height:1px;background:#333;"></div>
<div class="a" style="left:287px;top:166px;width:8px;height:1px;background:#333;"></div>
<div class="a" style="left:385px;top:158px;width:12px;height:12px;background:#fff;border:1px solid #3a3a78;"></div>
<div class="a" style="left:388px;top:161px;width:6px;height:6px;background:#6a6ad0;"></div>
<div class="a" style="left:685px;top:158px;width:12px;height:12px;background:#fff;border:1px solid #3a3a78;"></div>
<div class="a" style="left:688px;top:161px;width:6px;height:6px;background:#6a6ad0;"></div>
<svg style="left:987px;top:161px" width="8" height="8" viewBox="0 0 8 8"><path d="M7.500 .5L1 3 7.500 5.500" fill="none" stroke="#1a1a5a" stroke-width="1.100"/><path d="M.5 7.300h7.500" stroke="#1a1a5a" stroke-width="1.100"/></svg>
<div class="a" style="left:200px;top:156px;width:1px;height:18px;background:repeating-linear-gradient(to bottom,#b4b4b4 0 1px,transparent 1px 2px);"></div>
<div class="a" style="left:300px;top:156px;width:1px;height:18px;background:repeating-linear-gradient(to bottom,#b4b4b4 0 1px,transparent 1px 2px);"></div>
<div class="a" style="left:399px;top:156px;width:1px;height:18px;background:repeating-linear-gradient(to bottom,#b4b4b4 0 1px,transparent 1px 2px);"></div>
<div class="a" style="left:699px;top:156px;width:1px;height:18px;background:repeating-linear-gradient(to bottom,#b4b4b4 0 1px,transparent 1px 2px);"></div>
<div class="a" style="left:999px;top:156px;width:1px;height:18px;background:repeating-linear-gradient(to bottom,#b4b4b4 0 1px,transparent 1px 2px);"></div>
<div class="a" style="left:183px;top:395px;width:1182px;height:19px;background:#fff3cf;"></div>
<span class="a" style="top:176.99px;font-size:11px;line-height:16px;left:205.00px;letter-spacing:-0.146px;">30/06/2019</span>
<span class="a" style="top:176.99px;font-size:11px;line-height:16px;left:305.20px;letter-spacing:-0.146px;">30/06/2019</span>
<span class="a" style="top:176.99px;font-size:11px;line-height:16px;left:386.40px;letter-spacing:-0.186px;">Bảng lương BPCN tháng 6 năm 2019</span>
<span class="a" style="top:176.99px;font-size:11px;line-height:16px;left:686.40px;letter-spacing:-0.113px;">Hạch toán chi phí lương BPCN tháng 6 năm 2019</span>
<span class="a" style="top:176.99px;font-size:11px;line-height:16px;left:1308.00px;letter-spacing:-0.106px;">20.666.872</span>
<span class="a" style="top:196.99px;font-size:11px;line-height:16px;left:205.00px;letter-spacing:-0.146px;">30/06/2019</span>
<span class="a" style="top:196.99px;font-size:11px;line-height:16px;left:305.20px;letter-spacing:-0.146px;">30/06/2019</span>
<span class="a" style="top:196.99px;font-size:11px;line-height:16px;left:386.40px;letter-spacing:-0.164px;">Bảng lương BMQL tháng 6 năm 2019</span>
<span class="a" style="top:196.99px;font-size:11px;line-height:16px;left:686.40px;letter-spacing:-0.100px;">Hạch toán chi phí lương BMQL tháng 6 năm 2019</span>
<span class="a" style="top:196.99px;font-size:11px;line-height:16px;left:1308.00px;letter-spacing:-0.106px;">23.465.010</span>
<span class="a" style="top:216.99px;font-size:11px;line-height:16px;left:205.00px;letter-spacing:-0.146px;">31/05/2019</span>
<span class="a" style="top:216.99px;font-size:11px;line-height:16px;left:305.20px;letter-spacing:-0.146px;">31/05/2019</span>
<span class="a" style="top:216.99px;font-size:11px;line-height:16px;left:386.40px;letter-spacing:-0.186px;">Bảng lương BPCN tháng 5 năm 2019</span>
<span class="a" style="top:216.99px;font-size:11px;line-height:16px;left:686.40px;letter-spacing:-0.113px;">Hạch toán chi phí lương BPCN tháng 5 năm 2019</span>
<span class="a" style="top:216.99px;font-size:11px;line-height:16px;left:1308.00px;letter-spacing:-0.106px;">21.888.320</span>
<span class="a" style="top:236.99px;font-size:11px;line-height:16px;left:205.00px;letter-spacing:-0.146px;">31/05/2019</span>
<span class="a" style="top:236.99px;font-size:11px;line-height:16px;left:305.20px;letter-spacing:-0.146px;">31/05/2019</span>
<span class="a" style="top:236.99px;font-size:11px;line-height:16px;left:386.40px;letter-spacing:-0.164px;">Bảng lương BMQL tháng 5 năm 2019</span>
<span class="a" style="top:236.99px;font-size:11px;line-height:16px;left:686.40px;letter-spacing:-0.100px;">Hạch toán chi phí lương BMQL tháng 5 năm 2019</span>
<span class="a" style="top:236.99px;font-size:11px;line-height:16px;left:1308.00px;letter-spacing:-0.106px;">23.465.010</span>
<span class="a" style="top:256.99px;font-size:11px;line-height:16px;left:205.00px;letter-spacing:-0.146px;">30/04/2019</span>
<span class="a" style="top:256.99px;font-size:11px;line-height:16px;left:305.20px;letter-spacing:-0.146px;">30/04/2019</span>
<span class="a" style="top:256.99px;font-size:11px;line-height:16px;left:386.40px;letter-spacing:-0.186px;">Bảng lương BPCN tháng 4 năm 2019</span>
<span class="a" style="top:256.99px;font-size:11px;line-height:16px;left:686.40px;letter-spacing:-0.113px;">Hạch toán chi phí lương BPCN tháng 4 năm 2019</span>
<span class="a" style="top:256.99px;font-size:11px;line-height:16px;left:1308.00px;letter-spacing:-0.106px;">20.666.872</span>
<span class="a" style="top:276.99px;font-size:11px;line-height:16px;left:205.00px;letter-spacing:-0.146px;">30/04/2019</span>
<span class="a" style="top:276.99px;font-size:11px;line-height:16px;left:305.20px;letter-spacing:-0.146px;">30/04/2019</span>
<span class="a" style="top:276.99px;font-size:11px;line-height:16px;left:386.40px;letter-spacing:-0.164px;">Bảng lương BMQL tháng 4 năm 2019</span>
<span class="a" style="top:276.99px;font-size:11px;line-height:16px;left:686.40px;letter-spacing:-0.100px;">Hạch toán chi phí lương BMQL tháng 4 năm 2019</span>
<span class="a" style="top:276.99px;font-size:11px;line-height:16px;left:1308.00px;letter-spacing:-0.106px;">23.465.010</span>
<span class="a" style="top:296.99px;font-size:11px;line-height:16px;left:205.00px;letter-spacing:-0.146px;">31/03/2019</span>
<span class="a" style="top:296.99px;font-size:11px;line-height:16px;left:305.20px;letter-spacing:-0.146px;">31/03/2019</span>
<span class="a" style="top:296.99px;font-size:11px;line-height:16px;left:386.40px;letter-spacing:-0.186px;">Bảng lương BPCN tháng 3 năm 2019</span>
<span class="a" style="top:296.99px;font-size:11px;line-height:16px;left:686.40px;letter-spacing:-0.113px;">Hạch toán chi phí lương BPCN tháng 3 năm 2019</span>
<span class="a" style="top:296.99px;font-size:11px;line-height:16px;left:1308.00px;letter-spacing:-0.106px;">20.972.234</span>
<span class="a" style="top:316.99px;font-size:11px;line-height:16px;left:205.00px;letter-spacing:-0.146px;">31/03/2019</span>
<span class="a" style="top:316.99px;font-size:11px;line-height:16px;left:305.20px;letter-spacing:-0.146px;">31/03/2019</span>
<span class="a" style="top:316.99px;font-size:11px;line-height:16px;left:386.40px;letter-spacing:-0.164px;">Bảng lương BMQL tháng 3 năm 2019</span>
<span class="a" style="top:316.99px;font-size:11px;line-height:16px;left:686.40px;letter-spacing:-0.100px;">Hạch toán chi phí lương BMQL tháng 3 năm 2019</span>
<span class="a" style="top:316.99px;font-size:11px;line-height:16px;left:1308.00px;letter-spacing:-0.106px;">23.465.010</span>
<span class="a" style="top:336.99px;font-size:11px;line-height:16px;left:205.00px;letter-spacing:-0.146px;">28/02/2019</span>
<span class="a" style="top:336.99px;font-size:11px;line-height:16px;left:305.20px;letter-spacing:-0.146px;">28/02/2019</span>
<span class="a" style="top:336.99px;font-size:11px;line-height:16px;left:386.40px;letter-spacing:-0.186px;">Bảng lương BPCN tháng 2 năm 2019</span>
<span class="a" style="top:336.99px;font-size:11px;line-height:16px;left:686.40px;letter-spacing:-0.113px;">Hạch toán chi phí lương BPCN tháng 2 năm 2019</span>
<span class="a" style="top:336.99px;font-size:11px;line-height:16px;left:1308.00px;letter-spacing:-0.106px;">20.056.148</span>
<span class="a" style="top:356.99px;font-size:11px;line-height:16px;left:205.00px;letter-spacing:-0.146px;">28/02/2019</span>
<span class="a" style="top:356.99px;font-size:11px;line-height:16px;left:305.20px;letter-spacing:-0.146px;">28/02/2019</span>
<span class="a" style="top:356.99px;font-size:11px;line-height:16px;left:386.40px;letter-spacing:-0.164px;">Bảng lương BMQL tháng 2 năm 2019</span>
<span class="a" style="top:356.99px;font-size:11px;line-height:16px;left:686.40px;letter-spacing:-0.100px;">Hạch toán chi phí lương BMQL tháng 2 năm 2019</span>
<span class="a" style="top:356.99px;font-size:11px;line-height:16px;left:1308.00px;letter-spacing:-0.106px;">23.465.010</span>
<span class="a" style="top:376.99px;font-size:11px;line-height:16px;left:205.00px;letter-spacing:-0.146px;">31/01/2019</span>
<span class="a" style="top:376.99px;font-size:11px;line-height:16px;left:305.20px;letter-spacing:-0.146px;">31/01/2019</span>
<span class="a" style="top:376.99px;font-size:11px;line-height:16px;left:386.40px;letter-spacing:-0.186px;">Bảng lương BPCN tháng 1 năm 2019</span>
<span class="a" style="top:376.99px;font-size:11px;line-height:16px;left:686.40px;letter-spacing:-0.113px;">Hạch toán chi phí lương BPCN tháng 1 năm 2019</span>
<span class="a" style="top:376.99px;font-size:11px;line-height:16px;left:1308.00px;letter-spacing:-0.106px;">21.888.320</span>
<span class="a" style="top:396.99px;font-size:11px;line-height:16px;left:205.00px;letter-spacing:-0.146px;">31/01/2019</span>
<span class="a" style="top:396.99px;font-size:11px;line-height:16px;left:305.20px;letter-spacing:-0.146px;">31/01/2019</span>
<span class="a" style="top:396.99px;font-size:11px;line-height:16px;left:386.40px;letter-spacing:-0.164px;">Bảng lương BMQL tháng 1 năm 2019</span>
<span class="a" style="top:396.99px;font-size:11px;line-height:16px;left:686.40px;letter-spacing:-0.105px;">Hạch toán chi phí lương tháng 1  BMQL năm 2019</span>
<span class="a" style="top:396.99px;font-size:11px;line-height:16px;left:1308.00px;letter-spacing:-0.106px;">23.465.010</span>
<div class="a" style="left:183px;top:174px;width:1182px;height:1px;background:repeating-linear-gradient(to right,#b4b4b4 0 1px,transparent 1px 2px);"></div>
<div class="a" style="left:183px;top:194px;width:1182px;height:1px;background:repeating-linear-gradient(to right,#b4b4b4 0 1px,transparent 1px 2px);"></div>
<div class="a" style="left:183px;top:214px;width:1182px;height:1px;background:repeating-linear-gradient(to right,#b4b4b4 0 1px,transparent 1px 2px);"></div>
<div class="a" style="left:183px;top:234px;width:1182px;height:1px;background:repeating-linear-gradient(to right,#b4b4b4 0 1px,transparent 1px 2px);"></div>
<div class="a" style="left:183px;top:254px;width:1182px;height:1px;background:repeating-linear-gradient(to right,#b4b4b4 0 1px,transparent 1px 2px);"></div>
<div class="a" style="left:183px;top:274px;width:1182px;height:1px;background:repeating-linear-gradient(to right,#b4b4b4 0 1px,transparent 1px 2px);"></div>
<div class="a" style="left:183px;top:294px;width:1182px;height:1px;background:repeating-linear-gradient(to right,#b4b4b4 0 1px,transparent 1px 2px);"></div>
<div class="a" style="left:183px;top:314px;width:1182px;height:1px;background:repeating-linear-gradient(to right,#b4b4b4 0 1px,transparent 1px 2px);"></div>
<div class="a" style="left:183px;top:334px;width:1182px;height:1px;background:repeating-linear-gradient(to right,#b4b4b4 0 1px,transparent 1px 2px);"></div>
<div class="a" style="left:183px;top:354px;width:1182px;height:1px;background:repeating-linear-gradient(to right,#b4b4b4 0 1px,transparent 1px 2px);"></div>
<div class="a" style="left:183px;top:374px;width:1182px;height:1px;background:repeating-linear-gradient(to right,#b4b4b4 0 1px,transparent 1px 2px);"></div>
<div class="a" style="left:183px;top:394px;width:1182px;height:1px;background:repeating-linear-gradient(to right,#b4b4b4 0 1px,transparent 1px 2px);"></div>
<div class="a" style="left:183px;top:414px;width:1182px;height:1px;background:repeating-linear-gradient(to right,#b4b4b4 0 1px,transparent 1px 2px);"></div>
<div class="a" style="left:183px;top:434px;width:1182px;height:1px;background:repeating-linear-gradient(to right,#b4b4b4 0 1px,transparent 1px 2px);"></div>
<div class="a" style="left:281px;top:155px;width:1px;height:289px;background:repeating-linear-gradient(to bottom,#b4b4b4 0 1px,transparent 1px 2px);"></div>
<div class="a" style="left:381px;top:155px;width:1px;height:289px;background:repeating-linear-gradient(to bottom,#b4b4b4 0 1px,transparent 1px 2px);"></div>
<div class="a" style="left:681px;top:155px;width:1px;height:289px;background:repeating-linear-gradient(to bottom,#b4b4b4 0 1px,transparent 1px 2px);"></div>
<div class="a" style="left:981px;top:155px;width:1px;height:289px;background:repeating-linear-gradient(to bottom,#b4b4b4 0 1px,transparent 1px 2px);"></div>
<div class="a" style="left:183px;top:395px;width:1182px;height:1px;background:repeating-linear-gradient(to right,#000 0 1px,transparent 1px 2px);"></div>
<div class="a" style="left:183px;top:413px;width:1182px;height:1px;background:repeating-linear-gradient(to right,#000 0 1px,transparent 1px 2px);"></div>
<div class="a" style="left:183px;top:444px;width:1182px;height:1px;background:#7ea3d3;"></div>
<div class="a" style="left:183px;top:445px;width:98px;height:14px;background:#d4d4d4;"></div>
<div class="a" style="left:282px;top:445px;width:699px;height:14px;background:#fff;"></div>
<div class="a" style="left:281px;top:445px;width:1px;height:14px;background:#7ea3d3;"></div>
<div class="a" style="left:981px;top:445px;width:1px;height:14px;background:#7ea3d3;"></div>
<div class="a" style="left:982px;top:445px;width:383px;height:14px;background:#d4d4d4;"></div>
<span class="a" style="top:443.69px;font-size:11px;line-height:16px;left:185.00px;letter-spacing:-0.147px;">Số dòng = 12</span>
<span class="a" style="top:443.69px;font-size:11px;line-height:16px;left:1302.00px;letter-spacing:-0.107px;">266.928.826</span>
<div class="a" style="left:748px;top:461px;width:50px;height:5px;background:#a9c4ea;border:1px solid #8eb0e0;border-top:none;"></div>
<svg style="left:770px;top:462px" width="6" height="3" viewBox="0 0 6 3"><path d="M0 0h6l-3 3z" fill="#fff"/></svg>
<div class="a" style="left:181px;top:486px;width:1185px;height:216px;background:#fff;border:1px solid #7ea3d3;border-width:1px 1px 1px 2px;border-top-color:#8eb0e0;"></div>
<div class="a" style="left:181px;top:467px;width:61px;height:20px;background:#ffe6a2;border:1px solid #8eb0e0;border-bottom:none;border-radius:1px 1px 0 0;"></div>
<span class="a" style="top:468.89px;font-size:11px;line-height:16px;left:192.30px;font-weight:bold;letter-spacing:0.277px;">Chi tiết</span>
<div class="a" style="left:183px;top:487px;width:1165px;height:19px;background:#adc6e6;"></div>
<div class="a" style="left:183px;top:506px;width:1165px;height:1px;background:#7ea3d3;"></div>
<div class="a" style="left:391px;top:487px;width:1px;height:19px;background:#7ea3d3;"></div>
<div class="a" style="left:486px;top:487px;width:1px;height:19px;background:#7ea3d3;"></div>
<div class="a" style="left:581px;top:487px;width:1px;height:19px;background:#7ea3d3;"></div>
<div class="a" style="left:701px;top:487px;width:1px;height:19px;background:#7ea3d3;"></div>
<div class="a" style="left:811px;top:487px;width:1px;height:19px;background:#7ea3d3;"></div>
<div class="a" style="left:961px;top:487px;width:1px;height:19px;background:#7ea3d3;"></div>
<div class="a" style="left:1071px;top:487px;width:1px;height:19px;background:#7ea3d3;"></div>
<div class="a" style="left:1221px;top:487px;width:1px;height:19px;background:#7ea3d3;"></div>
<div class="a" style="left:1331px;top:487px;width:1px;height:19px;background:#7ea3d3;"></div>
<span class="a" style="top:488.59px;font-size:11px;line-height:16px;left:259.00px;letter-spacing:0.076px;">Diễn giải</span>
<svg style="left:382px;top:492px" width="7" height="10" viewBox="0 0 7 10"><path d="M3.500 9.500v-4M.5 5.500h6M1.500 5.500v-5h3.500v5M5.500 5.500v-5" fill="none" stroke="#000" stroke-width="1"/></svg>
<span class="a" style="top:488.59px;font-size:11px;line-height:16px;left:418.50px;letter-spacing:-0.356px;">TK Nợ</span>
<svg style="left:478px;top:492px" width="7" height="10" viewBox="0 0 7 10"><path d="M3.500 9.500v-4M.5 5.500h6M1.500 5.500v-5h3.500v5M5.500 5.500v-5" fill="none" stroke="#000" stroke-width="1"/></svg>
<span class="a" style="top:488.59px;font-size:11px;line-height:16px;left:513.00px;letter-spacing:0.062px;">TK Có</span>
<svg style="left:573px;top:492px" width="7" height="10" viewBox="0 0 7 10"><path d="M3.500 9.500v-4M.5 5.500h6M1.500 5.500v-5h3.500v5M5.500 5.500v-5" fill="none" stroke="#000" stroke-width="1"/></svg>
<span class="a" style="top:488.59px;font-size:11px;line-height:16px;left:619.00px;letter-spacing:-0.036px;">Số tiền</span>
<svg style="left:691.5px;top:493px" width="9" height="7" viewBox="0 0 9 7"><path d="M0 3.500h4M4.500 .5v6M4.500 1.500h4v3.500h-4M4.500 5.500h4" fill="none" stroke="#000" stroke-width="1"/></svg>
<span class="a" style="top:488.59px;font-size:11px;line-height:16px;left:719.30px;letter-spacing:-0.305px;">Đối tượng Nợ</span>
<svg style="left:801.5px;top:493px" width="9" height="7" viewBox="0 0 9 7"><path d="M0 3.500h4M4.500 .5v6M4.500 1.500h4v3.500h-4M4.500 5.500h4" fill="none" stroke="#000" stroke-width="1"/></svg>
<span class="a" style="top:488.59px;font-size:11px;line-height:16px;left:839.20px;letter-spacing:-0.208px;">Tên đối tượng Nợ</span>
<svg style="left:951.5px;top:493px" width="9" height="7" viewBox="0 0 9 7"><path d="M0 3.500h4M4.500 .5v6M4.500 1.500h4v3.500h-4M4.500 5.500h4" fill="none" stroke="#000" stroke-width="1"/></svg>
<span class="a" style="top:488.59px;font-size:11px;line-height:16px;left:979.50px;letter-spacing:-0.297px;">Đối tượng Có</span>
<svg style="left:1061.5px;top:493px" width="9" height="7" viewBox="0 0 9 7"><path d="M0 3.500h4M4.500 .5v6M4.500 1.500h4v3.500h-4M4.500 5.500h4" fill="none" stroke="#000" stroke-width="1"/></svg>
<span class="a" style="top:488.59px;font-size:11px;line-height:16px;left:1099.60px;letter-spacing:-0.190px;">Tên đối tượng Có</span>
<svg style="left:1211.5px;top:493px" width="9" height="7" viewBox="0 0 9 7"><path d="M0 3.500h4M4.500 .5v6M4.500 1.500h4v3.500h-4M4.500 5.500h4" fill="none" stroke="#000" stroke-width="1"/></svg>
<span class="a" style="top:488.59px;font-size:11px;line-height:16px;left:1255.30px;letter-spacing:-0.214px;">Đơn vị</span>
<svg style="left:1321.5px;top:493px" width="9" height="7" viewBox="0 0 9 7"><path d="M0 3.500h4M4.500 .5v6M4.500 1.500h4v3.500h-4M4.500 5.500h4" fill="none" stroke="#000" stroke-width="1"/></svg>
<div class="a" style="left:1345px;top:493px;width:1px;height:8px;background:#000;"></div>
<div class="a" style="left:1346px;top:497px;width:2px;height:1px;background:#000;"></div>
<div class="a" style="left:812px;top:507px;width:149px;height:160px;background:#e4e4e4;"></div>
<div class="a" style="left:1072px;top:507px;width:149px;height:160px;background:#e4e4e4;"></div>
<span class="a" style="top:508.69px;font-size:11px;line-height:16px;left:187.50px;letter-spacing:-0.437px;">Lương BMQL</span>
<span class="a" style="top:508.69px;font-size:11px;line-height:16px;left:396.00px;letter-spacing:-0.246px;">6422</span>
<span class="a" style="top:508.69px;font-size:11px;line-height:16px;left:491.00px;letter-spacing:-0.246px;">3341</span>
<span class="a" style="top:508.69px;font-size:11px;line-height:16px;left:651.50px;letter-spacing:-0.160px;">8.792.700</span>
<span class="a" style="top:528.69px;font-size:11px;line-height:16px;left:187.50px;letter-spacing:-0.437px;">Lương BMQL</span>
<span class="a" style="top:528.69px;font-size:11px;line-height:16px;left:396.00px;letter-spacing:-0.246px;">6422</span>
<span class="a" style="top:528.69px;font-size:11px;line-height:16px;left:491.00px;letter-spacing:-0.246px;">3341</span>
<span class="a" style="top:528.69px;font-size:11px;line-height:16px;left:651.50px;letter-spacing:-0.160px;">8.718.500</span>
<span class="a" style="top:548.69px;font-size:11px;line-height:16px;left:187.50px;letter-spacing:-0.065px;">BHTN công ty đóng</span>
<span class="a" style="top:548.69px;font-size:11px;line-height:16px;left:396.00px;letter-spacing:-0.246px;">6422</span>
<span class="a" style="top:548.69px;font-size:11px;line-height:16px;left:491.00px;letter-spacing:-0.246px;">3385</span>
<span class="a" style="top:548.69px;font-size:11px;line-height:16px;left:666.50px;letter-spacing:-0.193px;">87.927</span>
<span class="a" style="top:568.69px;font-size:11px;line-height:16px;left:187.50px;letter-spacing:-0.065px;">BHTN công ty đóng</span>
<span class="a" style="top:568.69px;font-size:11px;line-height:16px;left:396.00px;letter-spacing:-0.246px;">6422</span>
<span class="a" style="top:568.69px;font-size:11px;line-height:16px;left:491.00px;letter-spacing:-0.246px;">3385</span>
<span class="a" style="top:568.69px;font-size:11px;line-height:16px;left:666.50px;letter-spacing:-0.193px;">87.185</span>
<span class="a" style="top:588.69px;font-size:11px;line-height:16px;left:187.50px;letter-spacing:-0.081px;">BHTN nhân viên đóng</span>
<span class="a" style="top:588.69px;font-size:11px;line-height:16px;left:396.00px;letter-spacing:-0.246px;">3341</span>
<span class="a" style="top:588.69px;font-size:11px;line-height:16px;left:491.00px;letter-spacing:-0.246px;">3385</span>
<span class="a" style="top:588.69px;font-size:11px;line-height:16px;left:660.50px;letter-spacing:-0.065px;">175.112</span>
<span class="a" style="top:608.69px;font-size:11px;line-height:16px;left:187.50px;letter-spacing:-0.101px;">BHXH công ty đóng</span>
<span class="a" style="top:608.69px;font-size:11px;line-height:16px;left:396.00px;letter-spacing:-0.246px;">6422</span>
<span class="a" style="top:608.69px;font-size:11px;line-height:16px;left:491.00px;letter-spacing:-0.246px;">3383</span>
<span class="a" style="top:608.69px;font-size:11px;line-height:16px;left:651.50px;letter-spacing:-0.160px;">1.538.723</span>
<span class="a" style="top:628.69px;font-size:11px;line-height:16px;left:187.50px;letter-spacing:-0.101px;">BHXH công ty đóng</span>
<span class="a" style="top:628.69px;font-size:11px;line-height:16px;left:396.00px;letter-spacing:-0.246px;">6422</span>
<span class="a" style="top:628.69px;font-size:11px;line-height:16px;left:491.00px;letter-spacing:-0.246px;">3383</span>
<span class="a" style="top:628.69px;font-size:11px;line-height:16px;left:651.50px;letter-spacing:-0.160px;">1.525.738</span>
<span class="a" style="top:648.69px;font-size:11px;line-height:16px;left:187.50px;letter-spacing:-0.098px;">BHXH nhân viên đóng</span>
<span class="a" style="top:648.69px;font-size:11px;line-height:16px;left:396.00px;letter-spacing:-0.246px;">3341</span>
<span class="a" style="top:648.69px;font-size:11px;line-height:16px;left:491.00px;letter-spacing:-0.246px;">3383</span>
<span class="a" style="top:648.69px;font-size:11px;line-height:16px;left:651.50px;letter-spacing:-0.160px;">1.400.896</span>
<div class="a" style="left:183px;top:526px;width:1165px;height:1px;background:repeating-linear-gradient(to right,#b4b4b4 0 1px,transparent 1px 2px);"></div>
<div class="a" style="left:183px;top:546px;width:1165px;height:1px;background:repeating-linear-gradient(to right,#b4b4b4 0 1px,transparent 1px 2px);"></div>
<div class="a" style="left:183px;top:566px;width:1165px;height:1px;background:repeating-linear-gradient(to right,#b4b4b4 0 1px,transparent 1px 2px);"></div>
<div class="a" style="left:183px;top:586px;width:1165px;height:1px;background:repeating-linear-gradient(to right,#b4b4b4 0 1px,transparent 1px 2px);"></div>
<div class="a" style="left:183px;top:606px;width:1165px;height:1px;background:repeating-linear-gradient(to right,#b4b4b4 0 1px,transparent 1px 2px);"></div>
<div class="a" style="left:183px;top:626px;width:1165px;height:1px;background:repeating-linear-gradient(to right,#b4b4b4 0 1px,transparent 1px 2px);"></div>
<div class="a" style="left:183px;top:646px;width:1165px;height:1px;background:repeating-linear-gradient(to right,#b4b4b4 0 1px,transparent 1px 2px);"></div>
<div class="a" style="left:183px;top:666px;width:1165px;height:1px;background:repeating-linear-gradient(to right,#b4b4b4 0 1px,transparent 1px 2px);"></div>
<div class="a" style="left:391px;top:507px;width:1px;height:160px;background:repeating-linear-gradient(to bottom,#b4b4b4 0 1px,transparent 1px 2px);"></div>
<div class="a" style="left:486px;top:507px;width:1px;height:160px;background:repeating-linear-gradient(to bottom,#b4b4b4 0 1px,transparent 1px 2px);"></div>
<div class="a" style="left:581px;top:507px;width:1px;height:160px;background:repeating-linear-gradient(to bottom,#b4b4b4 0 1px,transparent 1px 2px);"></div>
<div class="a" style="left:701px;top:507px;width:1px;height:160px;background:repeating-linear-gradient(to bottom,#b4b4b4 0 1px,transparent 1px 2px);"></div>
<div class="a" style="left:811px;top:507px;width:1px;height:160px;background:repeating-linear-gradient(to bottom,#b4b4b4 0 1px,transparent 1px 2px);"></div>
<div class="a" style="left:961px;top:507px;width:1px;height:160px;background:repeating-linear-gradient(to bottom,#b4b4b4 0 1px,transparent 1px 2px);"></div>
<div class="a" style="left:1071px;top:507px;width:1px;height:160px;background:repeating-linear-gradient(to bottom,#b4b4b4 0 1px,transparent 1px 2px);"></div>
<div class="a" style="left:1221px;top:507px;width:1px;height:160px;background:repeating-linear-gradient(to bottom,#b4b4b4 0 1px,transparent 1px 2px);"></div>
<div class="a" style="left:1331px;top:507px;width:1px;height:160px;background:repeating-linear-gradient(to bottom,#b4b4b4 0 1px,transparent 1px 2px);"></div>
<div class="a" style="left:581px;top:507px;width:1px;height:160px;background:#8a8a8a;"></div>
<div class="a" style="left:183px;top:668px;width:1165px;height:1px;background:#7ea3d3;"></div>
<div class="a" style="left:183px;top:669px;width:208px;height:14px;background:#d4d4d4;"></div>
<div class="a" style="left:391px;top:669px;width:1px;height:14px;background:#7ea3d3;"></div>
<div class="a" style="left:581px;top:669px;width:1px;height:14px;background:#7ea3d3;"></div>
<div class="a" style="left:582px;top:669px;width:119px;height:14px;background:#d4d4d4;"></div>
<div class="a" style="left:701px;top:669px;width:1px;height:14px;background:#7ea3d3;"></div>
<span class="a" style="top:667.69px;font-size:11px;line-height:16px;left:185.20px;letter-spacing:-0.164px;">Số dòng = 13</span>
<span class="a" style="top:667.69px;font-size:11px;line-height:16px;left:645.00px;letter-spacing:-0.106px;">23.465.010</span>
<div class="a" style="left:183px;top:683px;width:1165px;height:1px;background:#7ea3d3;"></div>
<div class="a" style="left:183px;top:684px;width:1165px;height:17px;background:#adc6e6;"></div>
<div class="a" style="left:742px;top:684px;width:589px;height:17px;background:#d6d6d6;"></div>
<svg style="left:188px;top:689px" width="4" height="7" viewBox="0 0 4 7"><path d="M4 0v7L0 3.500z" fill="#000"/></svg>
<svg style="left:1338px;top:689px" width="4" height="7" viewBox="0 0 4 7"><path d="M0 0v7l4-3.500z" fill="#000"/></svg>
<div class="a" style="left:1348px;top:487px;width:17px;height:197px;background:#adc6e6;"></div>
<div class="a" style="left:1348px;top:593px;width:17px;height:74px;background:#d6d6d6;"></div>
<svg style="left:1353px;top:494.5px" width="7" height="4" viewBox="0 0 7 4"><path d="M0 4h7L3.500 0z" fill="#000"/></svg>
<svg style="left:1352.5px;top:674px" width="8" height="4" viewBox="0 0 8 4"><path d="M0 0h8L4 4z" fill="#000"/></svg>
<div class="a" style="left:1348px;top:684px;width:17px;height:17px;background:#f0f0f0;"></div>
<div class="a" style="left:0px;top:705px;width:1366px;height:23px;background:#b0c9e7;"></div>
<div class="a" style="left:2.5px;top:707px;width:200.0px;height:19px;border:1px solid #8cafe0;"></div>
<div class="a" style="left:205.5px;top:707px;width:154.5px;height:19px;border:1px solid #8cafe0;"></div>
<div class="a" style="left:363.5px;top:707px;width:120.5px;height:19px;border:1px solid #8cafe0;"></div>
<div class="a" style="left:487.5px;top:707px;width:10.0px;height:19px;border:1px solid #8cafe0;"></div>
<div class="a" style="left:500.5px;top:707px;width:416.0px;height:19px;border:1px solid #8cafe0;"></div>
<div class="a" style="left:919.5px;top:707px;width:181.0px;height:19px;border:1px solid #8cafe0;"></div>
<div class="a" style="left:1103.5px;top:707px;width:29.5px;height:19px;border:1px solid #8cafe0;"></div>
<div class="a" style="left:1136.5px;top:707px;width:30.0px;height:19px;border:1px solid #8cafe0;"></div>
<div class="a" style="left:1170.5px;top:707px;width:36.0px;height:19px;border:1px solid #8cafe0;"></div>
<div class="a" style="left:1209.5px;top:707px;width:34.5px;height:19px;border:1px solid #8cafe0;"></div>
<div class="a" style="left:1247px;top:707px;width:53.5px;height:19px;border:1px solid #8cafe0;"></div>
<div class="a" style="left:1303.5px;top:707px;width:61.5px;height:19px;border:1px solid #8cafe0;"></div>
<svg style="left:5px;top:708px" width="12" height="16" viewBox="0 0 12 16"><path d="M.5 2.500l8-2 3 1v12l-3 2-8-2z" fill="#b8bcd8" stroke="#6a6e98" stroke-width=".8"/><path d="M8.500 .5v15" stroke="#8a8eb8" stroke-width=".8"/><circle cx="4" cy="12" r="3.500" fill="#2aa83a" stroke="#fff" stroke-width=".6"/><path d="M2.300 12l1.300 1.300 2.200-2.600" fill="none" stroke="#fff" stroke-width="1.100"/></svg>
<svg style="left:207.5px;top:708px" width="12" height="16" viewBox="0 0 12 16"><path d="M.5 3v10c0 1.500 2.500 2.500 5.500 2.500s5.500-1 5.500-2.500V3" fill="#f6d84a" stroke="#b8960a" stroke-width=".8"/><ellipse cx="6" cy="3" rx="5.500" ry="2.500" fill="#fbe98a" stroke="#b8960a" stroke-width=".8"/><path d="M.5 8c0 1.500 2.500 2.500 5.500 2.500s5.500-1 5.500-2.500" fill="none" stroke="#c8a61a" stroke-width=".7"/></svg>
<svg style="left:366px;top:708px" width="12" height="16" viewBox="0 0 12 16"><circle cx="6.500" cy="4" r="3" fill="#f6d23a" stroke="#a8861a" stroke-width=".6"/><path d="M.5 15.500c0-5 2.500-7.500 6-7.500s5.500 2.500 5.500 7.500z" fill="#5aa0f0" stroke="#1a5ab8" stroke-width=".8"/><path d="M6.500 8.500l-1.500 4 1.500 2 1.500-2z" fill="#fff"/></svg>
<span class="a" style="top:708.89px;font-size:11px;line-height:16px;left:21.30px;letter-spacing:-0.089px;">Máy chủ: MAYCHU\MISASME2017</span>
<span class="a" style="top:708.89px;font-size:11px;line-height:16px;left:224.00px;letter-spacing:0.022px;">Tên DLKT: TANKY2018-...</span>
<span class="a" style="top:708.89px;font-size:11px;line-height:16px;left:382.00px;letter-spacing:-0.180px;">Người dùng: ADMIN</span>
<span class="a" style="top:708.89px;font-size:11px;line-height:16px;left:922.50px;font-weight:bold;letter-spacing:0.136px;">Tổng đài tư vấn: MISA SUPPORT</span>
<span class="a" style="top:708.89px;font-size:11px;line-height:16px;left:1106.50px;letter-spacing:-0.281px;">OVR</span>
<span class="a" style="top:708.89px;font-size:11px;line-height:16px;left:1139.00px;letter-spacing:-0.188px;">NUM</span>
<span class="a" style="top:708.89px;font-size:11px;line-height:16px;left:1250.50px;letter-spacing:-0.234px;">8:25 SA</span>
<span class="a" style="top:708.89px;font-size:11px;line-height:16px;left:1306.50px;letter-spacing:-0.156px;">09/09/2019</span>
<div class="a" style="left:0px;top:728px;width:1366px;height:40px;background:linear-gradient(to bottom,#10181c 0,#10181c 1px,#44545a 1px,#2a3a40 2px,#223136 4px,#1b282d 55%,#151f23 100%);"></div>
<div class="a" style="left:505px;top:730px;width:640px;height:38px;background:linear-gradient(to right,rgba(40,60,58,0),rgba(44,64,60,.5) 20%,rgba(40,58,56,.45) 70%,rgba(30,40,45,0));"></div>
<svg style="left:8px;top:729px" width="38" height="38" viewBox="0 0 38 38"><defs><radialGradient id="og" cx=".5" cy=".95" r=".9"><stop offset="0" stop-color="#3fd0ff"/><stop offset=".35" stop-color="#1a7ac8"/><stop offset=".75" stop-color="#123f78"/><stop offset="1" stop-color="#1a3a5a"/></radialGradient><linearGradient id="oh" x1="0" y1="0" x2="0" y2="1"><stop offset="0" stop-color="#fff" stop-opacity=".55"/><stop offset="1" stop-color="#fff" stop-opacity=".05"/></linearGradient></defs><circle cx="19" cy="19" r="18.300" fill="url(#og)" stroke="#8fb4cc" stroke-width=".8"/><path d="M2.500 17A16.500 16.500 0 0 1 35.500 17C28 21 10 21 2.500 17z" fill="url(#oh)"/><path d="M10 9.500c3.500-1.700 6-1.200 9 .3l-1.800 8c-3-1.300-5.500-1.500-9 0z" fill="#f0622a"/><path d="M20.500 10.500c3 1.300 6 1.500 9.500-.3l-1.800 8c-3.500 1.600-6.500 1.300-9.500 0z" fill="#8cc43a"/><path d="M7.800 19.500c3.500-1.500 6-1.300 9 0l-1.800 8c-3-1.300-5.500-1.500-9 0z" fill="#3a9ef0"/><path d="M18.300 20.500c3 1.300 6 1.500 9.500 0l-1.800 8c-3.500 1.500-6.500 1.300-9.500 0z" fill="#fbc21e"/></svg>
<svg style="left:73px;top:731px" width="34" height="34" viewBox="0 0 34 34"><defs><linearGradient id="ieg" x1="0" y1="0" x2="0" y2="1"><stop offset="0" stop-color="#7fd6ff"/><stop offset=".5" stop-color="#2aa0ec"/><stop offset="1" stop-color="#45c4ff"/></linearGradient></defs><path d="M2.500 30C-1 24 8 11 18 6 24 3 29.500 3.500 30 6" fill="none" stroke="#f6c21e" stroke-width="2.200"/><text x="17.700" y="30.700" font-family="Liberation Sans" font-weight="bold" font-size="49" fill="url(#ieg)" text-anchor="middle">e</text><path d="M30 6C31 9 28 13 26 15.500" fill="none" stroke="#f6c21e" stroke-width="2.200"/><path d="M2.500 30C4 33 9 32 12.500 30" fill="none" stroke="#f6c21e" stroke-width="2"/></svg>
<svg style="left:134.5px;top:731.5px" width="34" height="34" viewBox="0 0 34 34"><circle cx="16.700" cy="16.700" r="16.300" fill="#fff"/><circle cx="16.700" cy="16.700" r="15" fill="#5aac46"/><path d="M16.700 16.700L20.500 0 33 3.500 33 15z" fill="#fff"/><path d="M16.700 16.700L24.500 .5 33 .5 30.500 6.500z" fill="#5aac46"/><path d="M24.200 1.200L31.500 1 32 4z" fill="#fff"/><circle cx="16.700" cy="16.700" r="7.300" fill="#5aac46" stroke="#fff" stroke-width="1.700"/><circle cx="16.700" cy="16.700" r="2" fill="#5aac46"/><path d="M18.500 8l.5-6 2 .3zM22 10.500l4.500-4.500 1.300 1.300zM24 13l5-1.500.3 1.700z" fill="#f26a1e" stroke="#f26a1e" stroke-width=".8"/></svg>
<div class="a" style="left:183px;top:729px;width:160px;height:39px;background:#0c1216;border-radius:3px;"></div>
<div class="a" style="left:184px;top:730px;width:158px;height:37px;border:1px solid #7b878c;border-radius:2px;background:linear-gradient(to bottom,#56646a 0,#3e4c52 45%,#283439 52%,#2c383d 80%,#384448 100%);"></div>
<svg style="left:194px;top:734px" width="29" height="29" viewBox="0 0 29 29"><circle cx="14.500" cy="14.500" r="14" fill="#fff"/><path d="M14.500 14.500L2.400 7.500A14 14 0 0 1 26.600 7.500z" fill="#e8423a"/><path d="M14.500 14.500L26.600 7.500A14 14 0 0 1 14.500 28.500z" fill="#fbc21e"/><path d="M14.500 14.500L14.500 28.500A14 14 0 0 1 2.400 7.500z" fill="#34a853"/><path d="M14.500 7.500h12.100A14 14 0 0 0 2.400 7.500z" fill="#e8423a"/><circle cx="14.500" cy="14.500" r="6.500" fill="#fff"/><circle cx="14.500" cy="14.500" r="5.200" fill="#4a8af4"/></svg>
<span class="a" style="top:739.54px;font-size:12px;line-height:16px;left:229.00px;color:#fff;letter-spacing:-0.146px;">Đăng chủ đề mới ...</span>
<div class="a" style="left:345px;top:729px;width:160px;height:39px;background:#0c1216;border-radius:3px;"></div>
<div class="a" style="left:346px;top:730px;width:158px;height:37px;border:1px solid #e4e8e9;border-radius:2px;background:linear-gradient(to bottom,#ccd1d2 0,#b0b7b8 35%,#7f8b8d 52%,#88918f 75%,#a0a6a4 100%);"></div>
<svg style="left:355px;top:732px" width="32" height="32" viewBox="0 0 32 32"><defs><clipPath id="lg2"><circle cx="16" cy="16" r="16"/></clipPath></defs><g clip-path="url(#lg2)"><circle cx="16" cy="16" r="16" fill="#1aa0e8"/><circle cx="8.500" cy="12" r="9.500" fill="#ee1c24"/><path d="M8 3.500C14-2 28 1 29.500 11 30 16 25 19 20.500 16.500 16 14 17 8 13 5.500 11 4 9 4 8 3.500z" fill="#fdb913"/><path d="M29 8.500C35 16 32 28 22 30.500 17 31 14.500 25 17 21.500 19.500 17 26 18 28 14 29 12 29 10 29 8.500z" fill="#0d9be8"/><path d="M24 29.500C17 34 5 31 3 22 2.500 17 8 14.500 11.500 16.500 16 19 15 25 19 27.500 21 28.500 23 29 24 29.500z" fill="#22b573"/><path d="M3.500 24C-2 17 1 5 10 2.500 15 2 18 7.500 15.500 11.500 13 16 6.500 15 4.500 19 3.500 21 3.500 23 3.500 24z" fill="#ee1c24"/><path d="M8 3.500C14-2 28 1 29.500 11 28 6 22 3.500 17 5 14 6 12 5 8 3.500z" fill="#fdb913"/><path d="M16 9.500L18 14 22.500 16 18 18 16 22.500 14 18 9.500 16 14 14z" fill="#fff"/></g></svg>
<span class="a" style="top:739.54px;font-size:12px;line-height:16px;left:391.50px;color:#fff;letter-spacing:-0.518px;">MISA SME.NET 20...</span>
<svg style="left:1155px;top:746px" width="9" height="5" viewBox="0 0 9 5"><path d="M0 5h9L4.500 0z" fill="#fff"/></svg>
<div class="a" style="left:1176px;top:741px;width:15px;height:15px;background:#b0262a;border:1px solid #e8c8c8;"></div>
<span class="a" style="top:741.34px;font-size:12px;line-height:16px;left:1179.50px;font-weight:bold;color:#fff;">V</span>
<svg style="left:1200px;top:741px" width="16" height="14" viewBox="0 0 16 14"><path d="M4 13a3.500 3.500 0 0 1-.5-7 4.500 4.500 0 0 1 8.500-1 4 4 0 0 1 0 8z" fill="#fff"/><path d="M8 11.500v-5M5.800 8.500L8 6l2.200 2.500" fill="none" stroke="#2a7ad8" stroke-width="1.500"/></svg>
<svg style="left:1225px;top:743px" width="14" height="12" viewBox="0 0 14 12"><rect x="0" y="10" width="2" height="2" fill="#fff"/><rect x="3" y="8" width="2" height="4" fill="#fff"/><rect x="6" y="6" width="2" height="6" fill="#fff"/><rect x="9" y="3" width="2" height="9" fill="#fff"/><rect x="12" y="0" width="2" height="12" fill="#fff"/></svg>
<svg style="left:1248px;top:741px" width="15" height="15" viewBox="0 0 15 15"><path d="M0 5h3l4-4v13l-4-4H0z" fill="#fff"/><path d="M9 4.500a4 4 0 0 1 0 6M11 2.500a7 7 0 0 1 0 10" fill="none" stroke="#fff" stroke-width="1.100"/></svg>
<span class="a" style="top:732.84px;font-size:12px;line-height:16px;left:1289.50px;color:#fff;letter-spacing:-0.076px;">8:25 AM</span>
<span class="a" style="top:749.34px;font-size:12px;line-height:16px;left:1281.50px;color:#fff;letter-spacing:-0.256px;">09/09/2019</span>
<div class="a" style="left:1353px;top:729px;width:13px;height:39px;border-left:1px solid #6a7880;background:linear-gradient(to bottom,rgba(255,255,255,.18),rgba(255,255,255,.05));"></div>
</body>
</html>
